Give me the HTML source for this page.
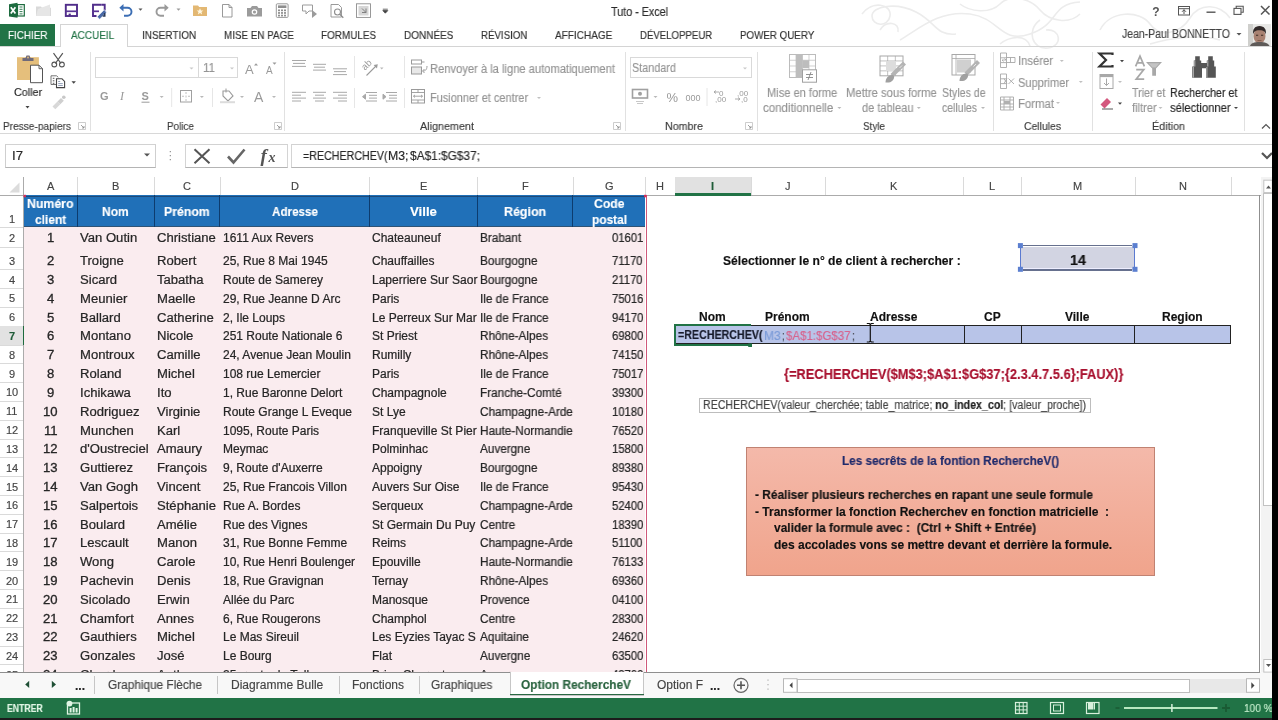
<!DOCTYPE html><html><head><meta charset='utf-8'><style>
html,body{margin:0;padding:0;width:1278px;height:720px;overflow:hidden;background:#fff;position:relative}
.a{position:absolute}
.t{position:absolute;white-space:pre;transform-origin:0 0;-webkit-text-stroke-width:0.15px;will-change:transform;}
svg.a{overflow:visible}
</style></head><body><div class="a" style="left:1272px;top:0px;width:6px;height:720px;background:#000;"></div>
<div class="a" style="left:0px;top:718px;width:1272px;height:2px;background:#1c1c1c;"></div>
<svg class="a" style="left:0;top:0" width="1278" height="60"><g fill="none" stroke="#ececec" stroke-width="1.6"><path d="M862 14c10-14 30-10 28 2s-18 10-18 0 24-14 44-4 20 24 40 22"/><path d="M900 40c20-12 40-30 70-26s30 30 60 20 20-30 50-32"/><path d="M960 4c10 8 30 10 40 0s30-6 40 6 30 14 40 4"/><path d="M1040 20c-14 10-8 30 8 28s12-20-2-18"/><path d="M1000 44c10-8 26-10 30 2"/><path d="M1100 30c10-20 40-20 50-6s30 10 40-6 30-14 40 0"/><path d="M1150 44c20-6 50-10 70-4"/><path d="M880 30c6-10 20-8 18 2"/></g></svg>
<div class="t" id="t0" style="left:610.50px;top:5.64px;font:400 12px/12px 'Liberation Sans',sans-serif;color:#2a2a2a;transform:scaleX(0.8965);">Tuto - Excel</div>
<div class="a" style="left:0px;top:24px;width:55px;height:22.5px;background:#217346;"></div>
<div class="t" id="t1" style="left:7.50px;top:30.49px;font:400 11px/11px 'Liberation Sans',sans-serif;color:#fff;transform:scaleX(0.8977);">FICHIER</div>
<div class="a" style="left:59.5px;top:24px;width:68.0px;height:23px;background:#fff;border:1px solid #d4d4d4;border-bottom:none;box-sizing:border-box;"></div>
<div class="a" style="left:0px;top:46px;width:59.5px;height:1px;background:#d4d4d4;"></div>
<div class="a" style="left:127.5px;top:46px;width:1144.5px;height:1px;background:#d4d4d4;"></div>
<div class="t" id="t2" style="left:71.40px;top:30.49px;font:400 11px/11px 'Liberation Sans',sans-serif;color:#217346;transform:scaleX(0.9059);">ACCUEIL</div>
<div class="t" id="t3" style="left:142.40px;top:30.49px;font:400 11px/11px 'Liberation Sans',sans-serif;color:#303030;transform:scaleX(0.9078);">INSERTION</div>
<div class="t" id="t4" style="left:224.40px;top:30.49px;font:400 11px/11px 'Liberation Sans',sans-serif;color:#303030;transform:scaleX(0.8943);">MISE EN PAGE</div>
<div class="t" id="t5" style="left:321.40px;top:30.49px;font:400 11px/11px 'Liberation Sans',sans-serif;color:#303030;transform:scaleX(0.9014);">FORMULES</div>
<div class="t" id="t6" style="left:404.00px;top:30.49px;font:400 11px/11px 'Liberation Sans',sans-serif;color:#303030;transform:scaleX(0.9080);">DONNÉES</div>
<div class="t" id="t7" style="left:481.00px;top:30.49px;font:400 11px/11px 'Liberation Sans',sans-serif;color:#303030;transform:scaleX(0.8825);">RÉVISION</div>
<div class="t" id="t8" style="left:555.00px;top:30.49px;font:400 11px/11px 'Liberation Sans',sans-serif;color:#303030;transform:scaleX(0.9118);">AFFICHAGE</div>
<div class="t" id="t9" style="left:640.00px;top:30.49px;font:400 11px/11px 'Liberation Sans',sans-serif;color:#303030;transform:scaleX(0.8748);">DÉVELOPPEUR</div>
<div class="t" id="t10" style="left:739.80px;top:30.49px;font:400 11px/11px 'Liberation Sans',sans-serif;color:#303030;transform:scaleX(0.8895);">POWER QUERY</div>
<div class="t" id="t11" style="left:1121.60px;top:28.34px;font:400 12px/12px 'Liberation Sans',sans-serif;color:#444;transform:scaleX(0.8722);">Jean-Paul BONNETTO</div>
<div class="a" style="left:0px;top:133px;width:1272px;height:1px;background:#d8d8d8;"></div>
<div class="t" id="t12" style="left:13.60px;top:87.42px;font:400 11.2px/11.2px 'Liberation Sans',sans-serif;color:#262626;transform:scaleX(0.9646);">Coller</div>
<div class="t" id="t13" style="left:3.00px;top:120.69px;font:400 11px/11px 'Liberation Sans',sans-serif;color:#3a3a3a;transform:scaleX(0.9191);">Presse-papiers</div>
<div class="t" id="t14" style="left:166.50px;top:120.69px;font:400 11px/11px 'Liberation Sans',sans-serif;color:#3a3a3a;transform:scaleX(0.9009);">Police</div>
<div class="t" id="t15" style="left:420.00px;top:120.69px;font:400 11px/11px 'Liberation Sans',sans-serif;color:#3a3a3a;transform:scaleX(0.9810);">Alignement</div>
<div class="t" id="t16" style="left:664.50px;top:120.69px;font:400 11px/11px 'Liberation Sans',sans-serif;color:#3a3a3a;transform:scaleX(0.9712);">Nombre</div>
<div class="t" id="t17" style="left:863.00px;top:120.69px;font:400 11px/11px 'Liberation Sans',sans-serif;color:#3a3a3a;transform:scaleX(0.8991);">Style</div>
<div class="t" id="t18" style="left:1023.50px;top:120.69px;font:400 11px/11px 'Liberation Sans',sans-serif;color:#3a3a3a;transform:scaleX(0.9453);">Cellules</div>
<div class="t" id="t19" style="left:1151.50px;top:120.69px;font:400 11px/11px 'Liberation Sans',sans-serif;color:#3a3a3a;transform:scaleX(0.9810);">Édition</div>
<div class="a" style="left:90px;top:52px;width:1px;height:79px;background:#e1e1e1;"></div>
<div class="a" style="left:284px;top:52px;width:1px;height:79px;background:#e1e1e1;"></div>
<div class="a" style="left:625.4px;top:52px;width:1.0px;height:79px;background:#e1e1e1;"></div>
<div class="a" style="left:757px;top:52px;width:1px;height:79px;background:#e1e1e1;"></div>
<div class="a" style="left:992.5px;top:52px;width:1.0px;height:79px;background:#e1e1e1;"></div>
<div class="a" style="left:1092px;top:52px;width:1px;height:79px;background:#e1e1e1;"></div>
<div class="a" style="left:1244px;top:52px;width:1px;height:79px;background:#e1e1e1;"></div>
<div class="a" style="left:95px;top:57.4px;width:143px;height:21.000000000000007px;background:#fff;box-shadow:inset 0 0 0 1px #d9d9d9;"></div>
<div class="a" style="left:198px;top:57.4px;width:1px;height:21.000000000000007px;background:#d9d9d9;"></div>
<div class="t" id="t20" style="left:203.00px;top:62.34px;font:400 12px/12px 'Liberation Sans',sans-serif;color:#949494;transform:scaleX(0.9624);">11</div>
<div class="a" style="left:629.5px;top:57.3px;width:122.5px;height:21.10000000000001px;background:#fff;box-shadow:inset 0 0 0 1px #d9d9d9;"></div>
<div class="t" id="t21" style="left:632.40px;top:62.34px;font:400 12px/12px 'Liberation Sans',sans-serif;color:#949494;transform:scaleX(0.9034);">Standard</div>
<div class="t" id="t22" style="left:429.50px;top:62.84px;font:400 12px/12px 'Liberation Sans',sans-serif;color:#949494;transform:scaleX(0.9306);">Renvoyer à la ligne automatiquement</div>
<div class="t" id="t23" style="left:429.50px;top:91.84px;font:400 12px/12px 'Liberation Sans',sans-serif;color:#949494;transform:scaleX(0.9126);">Fusionner et centrer</div>
<div class="t" id="t24" style="left:766.80px;top:86.84px;font:400 12px/12px 'Liberation Sans',sans-serif;color:#949494;transform:scaleX(0.9246);">Mise en forme</div>
<div class="t" id="t25" style="left:763.40px;top:101.84px;font:400 12px/12px 'Liberation Sans',sans-serif;color:#949494;transform:scaleX(0.9579);">conditionnelle</div>
<div class="t" id="t26" style="left:846.20px;top:86.84px;font:400 12px/12px 'Liberation Sans',sans-serif;color:#949494;transform:scaleX(0.9390);">Mettre sous forme</div>
<div class="t" id="t27" style="left:862.30px;top:101.84px;font:400 12px/12px 'Liberation Sans',sans-serif;color:#949494;transform:scaleX(0.9168);">de tableau</div>
<div class="t" id="t28" style="left:942.00px;top:86.84px;font:400 12px/12px 'Liberation Sans',sans-serif;color:#949494;transform:scaleX(0.8833);">Styles de</div>
<div class="t" id="t29" style="left:942.00px;top:101.84px;font:400 12px/12px 'Liberation Sans',sans-serif;color:#949494;transform:scaleX(0.8743);">cellules</div>
<div class="t" id="t30" style="left:1017.60px;top:55.34px;font:400 12px/12px 'Liberation Sans',sans-serif;color:#949494;transform:scaleX(0.9368);">Insérer</div>
<div class="t" id="t31" style="left:1017.60px;top:76.84px;font:400 12px/12px 'Liberation Sans',sans-serif;color:#949494;transform:scaleX(0.9213);">Supprimer</div>
<div class="t" id="t32" style="left:1017.60px;top:98.34px;font:400 12px/12px 'Liberation Sans',sans-serif;color:#949494;transform:scaleX(0.9470);">Format</div>
<div class="t" id="t33" style="left:1132.30px;top:86.84px;font:400 12px/12px 'Liberation Sans',sans-serif;color:#949494;transform:scaleX(0.8865);">Trier et</div>
<div class="t" id="t34" style="left:1132.30px;top:101.84px;font:400 12px/12px 'Liberation Sans',sans-serif;color:#949494;transform:scaleX(0.9261);">filtrer</div>
<div class="t" id="t35" style="left:1170.00px;top:86.84px;font:400 12px/12px 'Liberation Sans',sans-serif;color:#262626;transform:scaleX(0.8955);">Rechercher et</div>
<div class="t" id="t36" style="left:1170.00px;top:101.84px;font:400 12px/12px 'Liberation Sans',sans-serif;color:#262626;transform:scaleX(0.9379);">sélectionner</div>
<div class="a" style="left:5.25px;top:143.6px;width:150.75px;height:24.400000000000006px;background:#fff;border:1px solid #cfcfcf;border-top:1.5px solid #d2d2d2;border-bottom:1px solid #b4b4b4;box-sizing:border-box;"></div>
<div class="t" id="t37" style="left:11.50px;top:149.84px;font:400 12px/12px 'Liberation Sans',sans-serif;color:#262626;transform:scaleX(1.0983);">I7</div>
<div class="a" style="left:184.8px;top:143.6px;width:102.80000000000001px;height:24.400000000000006px;background:#fff;border:1px solid #d4d4d4;border-top:1.5px solid #d2d2d2;border-bottom:1px solid #b4b4b4;box-sizing:border-box;"></div>
<div class="a" style="left:290.6px;top:143.6px;width:981.4px;height:24.400000000000006px;background:#fff;border-top:1.5px solid #d2d2d2;border-bottom:1px solid #b4b4b4;border-left:1px solid #d4d4d4;box-sizing:border-box;"></div>
<div class="t" id="t38" style="left:302.50px;top:149.84px;font:400 12px/12px 'Liberation Sans',sans-serif;color:#262626;transform:scaleX(0.8893);">=RECHERCHEV(</div>
<div class="t" id="t39" style="left:388.20px;top:149.84px;font:400 12px/12px 'Liberation Sans',sans-serif;color:#262626;transform:scaleX(1.0242);">M3;</div>
<div class="t" id="t40" style="left:410.10px;top:149.84px;font:400 12px/12px 'Liberation Sans',sans-serif;color:#262626;transform:scaleX(0.9896);">$A$1:$G$37;</div>
<div class="a" style="left:0px;top:177px;width:1262px;height:18.30000000000001px;background:#fff;"></div>
<div class="a" style="left:0px;top:195px;width:1262px;height:1px;background:#ababab;"></div>
<div class="a" style="left:77.3px;top:177px;width:1.0px;height:18px;background:#dadada;"></div>
<div class="t" id="t41" style="left:46.98px;top:180.99px;font:400 11px/11px 'Liberation Sans',sans-serif;color:#444;">A</div>
<div class="a" style="left:154.3px;top:177px;width:1.0px;height:18px;background:#dadada;"></div>
<div class="t" id="t42" style="left:112.13px;top:180.99px;font:400 11px/11px 'Liberation Sans',sans-serif;color:#444;">B</div>
<div class="a" style="left:219.7px;top:177px;width:1.0px;height:18px;background:#dadada;"></div>
<div class="t" id="t43" style="left:183.02px;top:180.99px;font:400 11px/11px 'Liberation Sans',sans-serif;color:#444;">C</div>
<div class="a" style="left:369.3px;top:177px;width:1.0px;height:18px;background:#dadada;"></div>
<div class="t" id="t44" style="left:290.52px;top:180.99px;font:400 11px/11px 'Liberation Sans',sans-serif;color:#444;">D</div>
<div class="a" style="left:477.4px;top:177px;width:1.0px;height:18px;background:#dadada;"></div>
<div class="t" id="t45" style="left:419.68px;top:180.99px;font:400 11px/11px 'Liberation Sans',sans-serif;color:#444;">E</div>
<div class="a" style="left:572.8px;top:177px;width:1.0px;height:18px;background:#dadada;"></div>
<div class="t" id="t46" style="left:521.73px;top:180.99px;font:400 11px/11px 'Liberation Sans',sans-serif;color:#444;">F</div>
<div class="a" style="left:645.4px;top:177px;width:1.0px;height:18px;background:#dadada;"></div>
<div class="t" id="t47" style="left:604.82px;top:180.99px;font:400 11px/11px 'Liberation Sans',sans-serif;color:#444;">G</div>
<div class="a" style="left:674.5px;top:177px;width:1.0px;height:18px;background:#dadada;"></div>
<div class="t" id="t48" style="left:655.97px;top:180.99px;font:400 11px/11px 'Liberation Sans',sans-serif;color:#444;">H</div>
<div class="a" style="left:674.5px;top:177px;width:76.10000000000002px;height:18px;background:#e1e1e1;"></div>
<div class="a" style="left:674.5px;top:193px;width:76.10000000000002px;height:2.5px;background:#217346;"></div>
<div class="a" style="left:750.6px;top:177px;width:1.0px;height:18px;background:#dadada;"></div>
<div class="t" id="t49" style="left:711.02px;top:180.99px;font:700 11px/11px 'Liberation Sans',sans-serif;color:#1e5c38;">I</div>
<div class="a" style="left:825px;top:177px;width:1px;height:18px;background:#dadada;"></div>
<div class="t" id="t50" style="left:785.05px;top:180.99px;font:400 11px/11px 'Liberation Sans',sans-serif;color:#444;">J</div>
<div class="a" style="left:963px;top:177px;width:1px;height:18px;background:#dadada;"></div>
<div class="t" id="t51" style="left:890.33px;top:180.99px;font:400 11px/11px 'Liberation Sans',sans-serif;color:#444;">K</div>
<div class="a" style="left:1021px;top:177px;width:1px;height:18px;background:#dadada;"></div>
<div class="t" id="t52" style="left:988.94px;top:180.99px;font:400 11px/11px 'Liberation Sans',sans-serif;color:#444;">L</div>
<div class="a" style="left:1134.5px;top:177px;width:1.0px;height:18px;background:#dadada;"></div>
<div class="t" id="t53" style="left:1073.16px;top:180.99px;font:400 11px/11px 'Liberation Sans',sans-serif;color:#444;">M</div>
<div class="a" style="left:1230.5px;top:177px;width:1.0px;height:18px;background:#dadada;"></div>
<div class="t" id="t54" style="left:1178.52px;top:180.99px;font:400 11px/11px 'Liberation Sans',sans-serif;color:#444;">N</div>
<div class="a" style="left:23px;top:177px;width:1px;height:495px;background:#ababab;"></div>
<div class="a" style="left:0px;top:227.3px;width:23px;height:1.0px;background:#dadada;"></div>
<div class="t" id="t55" style="left:8.94px;top:213.79px;font:400 11px/11px 'Liberation Sans',sans-serif;color:#444;">1</div>
<div class="a" style="left:0px;top:246.7px;width:23px;height:1.0px;background:#dadada;"></div>
<div class="t" id="t56" style="left:8.94px;top:233.19px;font:400 11px/11px 'Liberation Sans',sans-serif;color:#444;">2</div>
<div class="a" style="left:0px;top:269.3px;width:23px;height:1.0px;background:#dadada;"></div>
<div class="t" id="t57" style="left:8.94px;top:255.79px;font:400 11px/11px 'Liberation Sans',sans-serif;color:#444;">3</div>
<div class="a" style="left:0px;top:288.11px;width:23px;height:1.0px;background:#dadada;"></div>
<div class="t" id="t58" style="left:8.94px;top:274.60px;font:400 11px/11px 'Liberation Sans',sans-serif;color:#444;">4</div>
<div class="a" style="left:0px;top:306.92px;width:23px;height:1.0px;background:#dadada;"></div>
<div class="t" id="t59" style="left:8.94px;top:293.41px;font:400 11px/11px 'Liberation Sans',sans-serif;color:#444;">5</div>
<div class="a" style="left:0px;top:325.73px;width:23px;height:1.0px;background:#dadada;"></div>
<div class="t" id="t60" style="left:8.94px;top:312.22px;font:400 11px/11px 'Liberation Sans',sans-serif;color:#444;">6</div>
<div class="a" style="left:0px;top:325.73px;width:23px;height:18.810000000000002px;background:#e2e2e2;"></div>
<div class="a" style="left:22.6px;top:325.73px;width:1.5999999999999979px;height:18.810000000000002px;background:#1e6b3e;"></div>
<div class="a" style="left:0px;top:344.54px;width:23px;height:1.0px;background:#dadada;"></div>
<div class="t" id="t61" style="left:8.94px;top:331.03px;font:700 11px/11px 'Liberation Sans',sans-serif;color:#1e5c38;">7</div>
<div class="a" style="left:0px;top:363.35px;width:23px;height:1.0px;background:#dadada;"></div>
<div class="t" id="t62" style="left:8.94px;top:349.84px;font:400 11px/11px 'Liberation Sans',sans-serif;color:#444;">8</div>
<div class="a" style="left:0px;top:382.15999999999997px;width:23px;height:1.0px;background:#dadada;"></div>
<div class="t" id="t63" style="left:8.94px;top:368.65px;font:400 11px/11px 'Liberation Sans',sans-serif;color:#444;">9</div>
<div class="a" style="left:0px;top:400.97px;width:23px;height:1.0px;background:#dadada;"></div>
<div class="t" id="t64" style="left:5.88px;top:387.46px;font:400 11px/11px 'Liberation Sans',sans-serif;color:#444;">10</div>
<div class="a" style="left:0px;top:419.78px;width:23px;height:1.0px;background:#dadada;"></div>
<div class="t" id="t65" style="left:6.29px;top:406.27px;font:400 11px/11px 'Liberation Sans',sans-serif;color:#444;">11</div>
<div class="a" style="left:0px;top:438.59000000000003px;width:23px;height:1.0px;background:#dadada;"></div>
<div class="t" id="t66" style="left:5.88px;top:425.08px;font:400 11px/11px 'Liberation Sans',sans-serif;color:#444;">12</div>
<div class="a" style="left:0px;top:457.4px;width:23px;height:1.0px;background:#dadada;"></div>
<div class="t" id="t67" style="left:5.88px;top:443.89px;font:400 11px/11px 'Liberation Sans',sans-serif;color:#444;">13</div>
<div class="a" style="left:0px;top:476.21000000000004px;width:23px;height:1.0px;background:#dadada;"></div>
<div class="t" id="t68" style="left:5.88px;top:462.70px;font:400 11px/11px 'Liberation Sans',sans-serif;color:#444;">14</div>
<div class="a" style="left:0px;top:495.02px;width:23px;height:1.0px;background:#dadada;"></div>
<div class="t" id="t69" style="left:5.88px;top:481.51px;font:400 11px/11px 'Liberation Sans',sans-serif;color:#444;">15</div>
<div class="a" style="left:0px;top:513.8299999999999px;width:23px;height:1.0px;background:#dadada;"></div>
<div class="t" id="t70" style="left:5.88px;top:500.32px;font:400 11px/11px 'Liberation Sans',sans-serif;color:#444;">16</div>
<div class="a" style="left:0px;top:532.64px;width:23px;height:1.0px;background:#dadada;"></div>
<div class="t" id="t71" style="left:5.88px;top:519.13px;font:400 11px/11px 'Liberation Sans',sans-serif;color:#444;">17</div>
<div class="a" style="left:0px;top:551.45px;width:23px;height:1.0px;background:#dadada;"></div>
<div class="t" id="t72" style="left:5.88px;top:537.94px;font:400 11px/11px 'Liberation Sans',sans-serif;color:#444;">18</div>
<div class="a" style="left:0px;top:570.26px;width:23px;height:1.0px;background:#dadada;"></div>
<div class="t" id="t73" style="left:5.88px;top:556.75px;font:400 11px/11px 'Liberation Sans',sans-serif;color:#444;">19</div>
<div class="a" style="left:0px;top:589.0699999999999px;width:23px;height:1.0px;background:#dadada;"></div>
<div class="t" id="t74" style="left:5.88px;top:575.56px;font:400 11px/11px 'Liberation Sans',sans-serif;color:#444;">20</div>
<div class="a" style="left:0px;top:607.88px;width:23px;height:1.0px;background:#dadada;"></div>
<div class="t" id="t75" style="left:5.88px;top:594.37px;font:400 11px/11px 'Liberation Sans',sans-serif;color:#444;">21</div>
<div class="a" style="left:0px;top:626.69px;width:23px;height:1.0px;background:#dadada;"></div>
<div class="t" id="t76" style="left:5.88px;top:613.18px;font:400 11px/11px 'Liberation Sans',sans-serif;color:#444;">22</div>
<div class="a" style="left:0px;top:645.5px;width:23px;height:1.0px;background:#dadada;"></div>
<div class="t" id="t77" style="left:5.88px;top:631.99px;font:400 11px/11px 'Liberation Sans',sans-serif;color:#444;">23</div>
<div class="a" style="left:0px;top:664.31px;width:23px;height:1.0px;background:#dadada;"></div>
<div class="t" id="t78" style="left:5.88px;top:650.80px;font:400 11px/11px 'Liberation Sans',sans-serif;color:#444;">24</div>
<div class="t" id="t79" style="left:5.88px;top:669.61px;font:400 11px/11px 'Liberation Sans',sans-serif;color:#444;">25</div>
<div class="a" style="left:24px;top:195.3px;width:621.4px;height:476.7px;background:#faecef;"></div>
<div class="a" style="left:24px;top:195.3px;width:621.4px;height:32.0px;background:#2070b8;"></div>
<div class="a" style="left:24px;top:195.6px;width:621.4px;height:1.1999999999999886px;background:#1e4a78;"></div>
<div class="a" style="left:24px;top:226.2px;width:621.4px;height:1.3000000000000114px;background:#2f5375;"></div>
<div class="a" style="left:76.8px;top:195.3px;width:1.0px;height:32.0px;background:#0d3c6e;"></div>
<div class="a" style="left:153.8px;top:195.3px;width:1.0px;height:32.0px;background:#0d3c6e;"></div>
<div class="a" style="left:219.2px;top:195.3px;width:1.0px;height:32.0px;background:#0d3c6e;"></div>
<div class="a" style="left:368.8px;top:195.3px;width:1.0px;height:32.0px;background:#0d3c6e;"></div>
<div class="a" style="left:476.9px;top:195.3px;width:1.0px;height:32.0px;background:#0d3c6e;"></div>
<div class="a" style="left:572.3px;top:195.3px;width:1.0px;height:32.0px;background:#0d3c6e;"></div>
<div class="a" style="left:645.9px;top:195.3px;width:1.1000000000000227px;height:476.7px;background:#d0587a;"></div>
<div class="t" id="t80" style="left:102.45px;top:205.00px;font:700 13px/13px 'Liberation Sans',sans-serif;color:#fff;transform:scaleX(0.9242);">Nom</div>
<div class="t" id="t81" style="left:164.15px;top:205.00px;font:700 13px/13px 'Liberation Sans',sans-serif;color:#fff;transform:scaleX(0.9441);">Prénom</div>
<div class="t" id="t82" style="left:271.50px;top:205.00px;font:700 13px/13px 'Liberation Sans',sans-serif;color:#fff;transform:scaleX(0.8965);">Adresse</div>
<div class="t" id="t83" style="left:409.85px;top:205.00px;font:700 13px/13px 'Liberation Sans',sans-serif;color:#fff;transform:scaleX(1.0183);">Ville</div>
<div class="t" id="t84" style="left:504.00px;top:205.00px;font:700 13px/13px 'Liberation Sans',sans-serif;color:#fff;transform:scaleX(0.9577);">Région</div>
<div class="t" id="t85" style="left:27.40px;top:197.20px;font:700 13px/13px 'Liberation Sans',sans-serif;color:#fff;transform:scaleX(0.9466);">Numéro</div>
<div class="t" id="t86" style="left:35.02px;top:212.80px;font:700 13px/13px 'Liberation Sans',sans-serif;color:#fff;transform:scaleX(0.9200);">client</div>
<div class="t" id="t87" style="left:593.85px;top:197.20px;font:700 13px/13px 'Liberation Sans',sans-serif;color:#fff;transform:scaleX(0.9385);">Code</div>
<div class="t" id="t88" style="left:591.60px;top:212.80px;font:700 13px/13px 'Liberation Sans',sans-serif;color:#fff;transform:scaleX(0.9139);">postal</div>
<div class="t" id="t89" style="left:47.01px;top:232.04px;font:400 12px/12px 'Liberation Sans',sans-serif;color:#262626;transform:scaleX(1.0900);-webkit-text-stroke:0.3px #262626;">1</div>
<div class="t" id="t90" style="left:79.90px;top:232.04px;font:400 12px/12px 'Liberation Sans',sans-serif;color:#262626;transform:scaleX(1.0900);-webkit-text-stroke:0.22px #262626;">Van Outin</div>
<div class="t" id="t91" style="left:156.90px;top:232.04px;font:400 12px/12px 'Liberation Sans',sans-serif;color:#262626;transform:scaleX(1.0900);-webkit-text-stroke:0.22px #262626;">Christiane</div>
<div class="t" id="t92" style="left:222.70px;top:232.04px;font:400 12px/12px 'Liberation Sans',sans-serif;color:#262626;-webkit-text-stroke:0.22px #262626;">1611 Aux Revers</div>
<div class="t" id="t93" style="left:372.30px;top:232.04px;font:400 12px/12px 'Liberation Sans',sans-serif;color:#262626;-webkit-text-stroke:0.22px #262626;">Chateauneuf</div>
<div class="t" id="t94" style="left:480.20px;top:232.04px;font:400 12px/12px 'Liberation Sans',sans-serif;color:#262626;transform:scaleX(0.9800);-webkit-text-stroke:0.22px #262626;">Brabant</div>
<div class="t" id="t95" style="left:611.63px;top:232.04px;font:400 12px/12px 'Liberation Sans',sans-serif;color:#262626;transform:scaleX(0.9400);-webkit-text-stroke:0.22px #262626;">01601</div>
<div class="t" id="t96" style="left:47.01px;top:254.84px;font:400 12px/12px 'Liberation Sans',sans-serif;color:#262626;transform:scaleX(1.0900);-webkit-text-stroke:0.3px #262626;">2</div>
<div class="t" id="t97" style="left:79.90px;top:254.84px;font:400 12px/12px 'Liberation Sans',sans-serif;color:#262626;transform:scaleX(1.0900);-webkit-text-stroke:0.22px #262626;">Troigne</div>
<div class="t" id="t98" style="left:156.90px;top:254.84px;font:400 12px/12px 'Liberation Sans',sans-serif;color:#262626;transform:scaleX(1.0900);-webkit-text-stroke:0.22px #262626;">Robert</div>
<div class="t" id="t99" style="left:222.70px;top:254.84px;font:400 12px/12px 'Liberation Sans',sans-serif;color:#262626;-webkit-text-stroke:0.22px #262626;">25, Rue 8 Mai 1945</div>
<div class="t" id="t100" style="left:372.30px;top:254.84px;font:400 12px/12px 'Liberation Sans',sans-serif;color:#262626;-webkit-text-stroke:0.22px #262626;">Chauffailles</div>
<div class="t" id="t101" style="left:480.20px;top:254.84px;font:400 12px/12px 'Liberation Sans',sans-serif;color:#262626;transform:scaleX(0.9800);-webkit-text-stroke:0.22px #262626;">Bourgogne</div>
<div class="t" id="t102" style="left:612.46px;top:254.84px;font:400 12px/12px 'Liberation Sans',sans-serif;color:#262626;transform:scaleX(0.9400);-webkit-text-stroke:0.22px #262626;">71170</div>
<div class="t" id="t103" style="left:47.01px;top:274.05px;font:400 12px/12px 'Liberation Sans',sans-serif;color:#262626;transform:scaleX(1.0900);-webkit-text-stroke:0.3px #262626;">3</div>
<div class="t" id="t104" style="left:79.90px;top:274.05px;font:400 12px/12px 'Liberation Sans',sans-serif;color:#262626;transform:scaleX(1.0900);-webkit-text-stroke:0.22px #262626;">Sicard</div>
<div class="t" id="t105" style="left:156.90px;top:274.05px;font:400 12px/12px 'Liberation Sans',sans-serif;color:#262626;transform:scaleX(1.0900);-webkit-text-stroke:0.22px #262626;">Tabatha</div>
<div class="t" id="t106" style="left:222.70px;top:274.05px;font:400 12px/12px 'Liberation Sans',sans-serif;color:#262626;-webkit-text-stroke:0.22px #262626;">Route de Samerey</div>
<div class="t" id="t107" style="left:372.30px;top:274.05px;font:400 12px/12px 'Liberation Sans',sans-serif;color:#262626;-webkit-text-stroke:0.22px #262626;">Laperriere Sur Saor</div>
<div class="t" id="t108" style="left:480.20px;top:274.05px;font:400 12px/12px 'Liberation Sans',sans-serif;color:#262626;transform:scaleX(0.9800);-webkit-text-stroke:0.22px #262626;">Bourgogne</div>
<div class="t" id="t109" style="left:612.46px;top:274.05px;font:400 12px/12px 'Liberation Sans',sans-serif;color:#262626;transform:scaleX(0.9400);-webkit-text-stroke:0.22px #262626;">21170</div>
<div class="t" id="t110" style="left:47.01px;top:292.86px;font:400 12px/12px 'Liberation Sans',sans-serif;color:#262626;transform:scaleX(1.0900);-webkit-text-stroke:0.3px #262626;">4</div>
<div class="t" id="t111" style="left:79.90px;top:292.86px;font:400 12px/12px 'Liberation Sans',sans-serif;color:#262626;transform:scaleX(1.0900);-webkit-text-stroke:0.22px #262626;">Meunier</div>
<div class="t" id="t112" style="left:156.90px;top:292.86px;font:400 12px/12px 'Liberation Sans',sans-serif;color:#262626;transform:scaleX(1.0900);-webkit-text-stroke:0.22px #262626;">Maelle</div>
<div class="t" id="t113" style="left:222.70px;top:292.86px;font:400 12px/12px 'Liberation Sans',sans-serif;color:#262626;-webkit-text-stroke:0.22px #262626;">29, Rue Jeanne D Arc</div>
<div class="t" id="t114" style="left:372.30px;top:292.86px;font:400 12px/12px 'Liberation Sans',sans-serif;color:#262626;-webkit-text-stroke:0.22px #262626;">Paris</div>
<div class="t" id="t115" style="left:480.20px;top:292.86px;font:400 12px/12px 'Liberation Sans',sans-serif;color:#262626;transform:scaleX(0.9800);-webkit-text-stroke:0.22px #262626;">Ile de France</div>
<div class="t" id="t116" style="left:611.63px;top:292.86px;font:400 12px/12px 'Liberation Sans',sans-serif;color:#262626;transform:scaleX(0.9400);-webkit-text-stroke:0.22px #262626;">75016</div>
<div class="t" id="t117" style="left:47.01px;top:311.67px;font:400 12px/12px 'Liberation Sans',sans-serif;color:#262626;transform:scaleX(1.0900);-webkit-text-stroke:0.3px #262626;">5</div>
<div class="t" id="t118" style="left:79.90px;top:311.67px;font:400 12px/12px 'Liberation Sans',sans-serif;color:#262626;transform:scaleX(1.0900);-webkit-text-stroke:0.22px #262626;">Ballard</div>
<div class="t" id="t119" style="left:156.90px;top:311.67px;font:400 12px/12px 'Liberation Sans',sans-serif;color:#262626;transform:scaleX(1.0900);-webkit-text-stroke:0.22px #262626;">Catherine</div>
<div class="t" id="t120" style="left:222.70px;top:311.67px;font:400 12px/12px 'Liberation Sans',sans-serif;color:#262626;-webkit-text-stroke:0.22px #262626;">2, Ile Loups</div>
<div class="t" id="t121" style="left:372.30px;top:311.67px;font:400 12px/12px 'Liberation Sans',sans-serif;color:#262626;-webkit-text-stroke:0.22px #262626;">Le Perreux Sur Mar</div>
<div class="t" id="t122" style="left:480.20px;top:311.67px;font:400 12px/12px 'Liberation Sans',sans-serif;color:#262626;transform:scaleX(0.9800);-webkit-text-stroke:0.22px #262626;">Ile de France</div>
<div class="t" id="t123" style="left:611.63px;top:311.67px;font:400 12px/12px 'Liberation Sans',sans-serif;color:#262626;transform:scaleX(0.9400);-webkit-text-stroke:0.22px #262626;">94170</div>
<div class="t" id="t124" style="left:47.01px;top:330.48px;font:400 12px/12px 'Liberation Sans',sans-serif;color:#262626;transform:scaleX(1.0900);-webkit-text-stroke:0.3px #262626;">6</div>
<div class="t" id="t125" style="left:79.90px;top:330.48px;font:400 12px/12px 'Liberation Sans',sans-serif;color:#262626;transform:scaleX(1.0900);-webkit-text-stroke:0.22px #262626;">Montano</div>
<div class="t" id="t126" style="left:156.90px;top:330.48px;font:400 12px/12px 'Liberation Sans',sans-serif;color:#262626;transform:scaleX(1.0900);-webkit-text-stroke:0.22px #262626;">Nicole</div>
<div class="t" id="t127" style="left:222.70px;top:330.48px;font:400 12px/12px 'Liberation Sans',sans-serif;color:#262626;-webkit-text-stroke:0.22px #262626;">251 Route Nationale 6</div>
<div class="t" id="t128" style="left:372.30px;top:330.48px;font:400 12px/12px 'Liberation Sans',sans-serif;color:#262626;-webkit-text-stroke:0.22px #262626;">St Priest</div>
<div class="t" id="t129" style="left:480.20px;top:330.48px;font:400 12px/12px 'Liberation Sans',sans-serif;color:#262626;transform:scaleX(0.9800);-webkit-text-stroke:0.22px #262626;">Rhône-Alpes</div>
<div class="t" id="t130" style="left:611.63px;top:330.48px;font:400 12px/12px 'Liberation Sans',sans-serif;color:#262626;transform:scaleX(0.9400);-webkit-text-stroke:0.22px #262626;">69800</div>
<div class="t" id="t131" style="left:47.01px;top:349.29px;font:400 12px/12px 'Liberation Sans',sans-serif;color:#262626;transform:scaleX(1.0900);-webkit-text-stroke:0.3px #262626;">7</div>
<div class="t" id="t132" style="left:79.90px;top:349.29px;font:400 12px/12px 'Liberation Sans',sans-serif;color:#262626;transform:scaleX(1.0900);-webkit-text-stroke:0.22px #262626;">Montroux</div>
<div class="t" id="t133" style="left:156.90px;top:349.29px;font:400 12px/12px 'Liberation Sans',sans-serif;color:#262626;transform:scaleX(1.0900);-webkit-text-stroke:0.22px #262626;">Camille</div>
<div class="t" id="t134" style="left:222.70px;top:349.29px;font:400 12px/12px 'Liberation Sans',sans-serif;color:#262626;-webkit-text-stroke:0.22px #262626;">24, Avenue Jean Moulin</div>
<div class="t" id="t135" style="left:372.30px;top:349.29px;font:400 12px/12px 'Liberation Sans',sans-serif;color:#262626;-webkit-text-stroke:0.22px #262626;">Rumilly</div>
<div class="t" id="t136" style="left:480.20px;top:349.29px;font:400 12px/12px 'Liberation Sans',sans-serif;color:#262626;transform:scaleX(0.9800);-webkit-text-stroke:0.22px #262626;">Rhône-Alpes</div>
<div class="t" id="t137" style="left:611.63px;top:349.29px;font:400 12px/12px 'Liberation Sans',sans-serif;color:#262626;transform:scaleX(0.9400);-webkit-text-stroke:0.22px #262626;">74150</div>
<div class="t" id="t138" style="left:47.01px;top:368.10px;font:400 12px/12px 'Liberation Sans',sans-serif;color:#262626;transform:scaleX(1.0900);-webkit-text-stroke:0.3px #262626;">8</div>
<div class="t" id="t139" style="left:79.90px;top:368.10px;font:400 12px/12px 'Liberation Sans',sans-serif;color:#262626;transform:scaleX(1.0900);-webkit-text-stroke:0.22px #262626;">Roland</div>
<div class="t" id="t140" style="left:156.90px;top:368.10px;font:400 12px/12px 'Liberation Sans',sans-serif;color:#262626;transform:scaleX(1.0900);-webkit-text-stroke:0.22px #262626;">Michel</div>
<div class="t" id="t141" style="left:222.70px;top:368.10px;font:400 12px/12px 'Liberation Sans',sans-serif;color:#262626;-webkit-text-stroke:0.22px #262626;">108 rue Lemercier</div>
<div class="t" id="t142" style="left:372.30px;top:368.10px;font:400 12px/12px 'Liberation Sans',sans-serif;color:#262626;-webkit-text-stroke:0.22px #262626;">Paris</div>
<div class="t" id="t143" style="left:480.20px;top:368.10px;font:400 12px/12px 'Liberation Sans',sans-serif;color:#262626;transform:scaleX(0.9800);-webkit-text-stroke:0.22px #262626;">Ile de France</div>
<div class="t" id="t144" style="left:611.63px;top:368.10px;font:400 12px/12px 'Liberation Sans',sans-serif;color:#262626;transform:scaleX(0.9400);-webkit-text-stroke:0.22px #262626;">75017</div>
<div class="t" id="t145" style="left:47.01px;top:386.91px;font:400 12px/12px 'Liberation Sans',sans-serif;color:#262626;transform:scaleX(1.0900);-webkit-text-stroke:0.3px #262626;">9</div>
<div class="t" id="t146" style="left:79.90px;top:386.91px;font:400 12px/12px 'Liberation Sans',sans-serif;color:#262626;transform:scaleX(1.0900);-webkit-text-stroke:0.22px #262626;">Ichikawa</div>
<div class="t" id="t147" style="left:156.90px;top:386.91px;font:400 12px/12px 'Liberation Sans',sans-serif;color:#262626;transform:scaleX(1.0900);-webkit-text-stroke:0.22px #262626;">Ito</div>
<div class="t" id="t148" style="left:222.70px;top:386.91px;font:400 12px/12px 'Liberation Sans',sans-serif;color:#262626;-webkit-text-stroke:0.22px #262626;">1, Rue Baronne Delort</div>
<div class="t" id="t149" style="left:372.30px;top:386.91px;font:400 12px/12px 'Liberation Sans',sans-serif;color:#262626;-webkit-text-stroke:0.22px #262626;">Champagnole</div>
<div class="t" id="t150" style="left:480.20px;top:386.91px;font:400 12px/12px 'Liberation Sans',sans-serif;color:#262626;transform:scaleX(0.9800);-webkit-text-stroke:0.22px #262626;">Franche-Comté</div>
<div class="t" id="t151" style="left:611.63px;top:386.91px;font:400 12px/12px 'Liberation Sans',sans-serif;color:#262626;transform:scaleX(0.9400);-webkit-text-stroke:0.22px #262626;">39300</div>
<div class="t" id="t152" style="left:43.37px;top:405.72px;font:400 12px/12px 'Liberation Sans',sans-serif;color:#262626;transform:scaleX(1.0900);-webkit-text-stroke:0.3px #262626;">10</div>
<div class="t" id="t153" style="left:79.90px;top:405.72px;font:400 12px/12px 'Liberation Sans',sans-serif;color:#262626;transform:scaleX(1.0900);-webkit-text-stroke:0.22px #262626;">Rodriguez</div>
<div class="t" id="t154" style="left:156.90px;top:405.72px;font:400 12px/12px 'Liberation Sans',sans-serif;color:#262626;transform:scaleX(1.0900);-webkit-text-stroke:0.22px #262626;">Virginie</div>
<div class="t" id="t155" style="left:222.70px;top:405.72px;font:400 12px/12px 'Liberation Sans',sans-serif;color:#262626;-webkit-text-stroke:0.22px #262626;">Route Grange L Eveque</div>
<div class="t" id="t156" style="left:372.30px;top:405.72px;font:400 12px/12px 'Liberation Sans',sans-serif;color:#262626;-webkit-text-stroke:0.22px #262626;">St Lye</div>
<div class="t" id="t157" style="left:480.20px;top:405.72px;font:400 12px/12px 'Liberation Sans',sans-serif;color:#262626;transform:scaleX(0.9800);-webkit-text-stroke:0.22px #262626;">Champagne-Arde</div>
<div class="t" id="t158" style="left:611.63px;top:405.72px;font:400 12px/12px 'Liberation Sans',sans-serif;color:#262626;transform:scaleX(0.9400);-webkit-text-stroke:0.22px #262626;">10180</div>
<div class="t" id="t159" style="left:43.85px;top:424.53px;font:400 12px/12px 'Liberation Sans',sans-serif;color:#262626;transform:scaleX(1.0900);-webkit-text-stroke:0.3px #262626;">11</div>
<div class="t" id="t160" style="left:79.90px;top:424.53px;font:400 12px/12px 'Liberation Sans',sans-serif;color:#262626;transform:scaleX(1.0900);-webkit-text-stroke:0.22px #262626;">Munchen</div>
<div class="t" id="t161" style="left:156.90px;top:424.53px;font:400 12px/12px 'Liberation Sans',sans-serif;color:#262626;transform:scaleX(1.0900);-webkit-text-stroke:0.22px #262626;">Karl</div>
<div class="t" id="t162" style="left:222.70px;top:424.53px;font:400 12px/12px 'Liberation Sans',sans-serif;color:#262626;-webkit-text-stroke:0.22px #262626;">1095, Route Paris</div>
<div class="t" id="t163" style="left:372.30px;top:424.53px;font:400 12px/12px 'Liberation Sans',sans-serif;color:#262626;-webkit-text-stroke:0.22px #262626;">Franqueville St Pier</div>
<div class="t" id="t164" style="left:480.20px;top:424.53px;font:400 12px/12px 'Liberation Sans',sans-serif;color:#262626;transform:scaleX(0.9800);-webkit-text-stroke:0.22px #262626;">Haute-Normandie</div>
<div class="t" id="t165" style="left:611.63px;top:424.53px;font:400 12px/12px 'Liberation Sans',sans-serif;color:#262626;transform:scaleX(0.9400);-webkit-text-stroke:0.22px #262626;">76520</div>
<div class="t" id="t166" style="left:43.37px;top:443.34px;font:400 12px/12px 'Liberation Sans',sans-serif;color:#262626;transform:scaleX(1.0900);-webkit-text-stroke:0.3px #262626;">12</div>
<div class="t" id="t167" style="left:79.90px;top:443.34px;font:400 12px/12px 'Liberation Sans',sans-serif;color:#262626;transform:scaleX(1.0900);-webkit-text-stroke:0.22px #262626;">d&#x27;Oustreciel</div>
<div class="t" id="t168" style="left:156.90px;top:443.34px;font:400 12px/12px 'Liberation Sans',sans-serif;color:#262626;transform:scaleX(1.0900);-webkit-text-stroke:0.22px #262626;">Amaury</div>
<div class="t" id="t169" style="left:222.70px;top:443.34px;font:400 12px/12px 'Liberation Sans',sans-serif;color:#262626;-webkit-text-stroke:0.22px #262626;">Meymac</div>
<div class="t" id="t170" style="left:372.30px;top:443.34px;font:400 12px/12px 'Liberation Sans',sans-serif;color:#262626;-webkit-text-stroke:0.22px #262626;">Polminhac</div>
<div class="t" id="t171" style="left:480.20px;top:443.34px;font:400 12px/12px 'Liberation Sans',sans-serif;color:#262626;transform:scaleX(0.9800);-webkit-text-stroke:0.22px #262626;">Auvergne</div>
<div class="t" id="t172" style="left:611.63px;top:443.34px;font:400 12px/12px 'Liberation Sans',sans-serif;color:#262626;transform:scaleX(0.9400);-webkit-text-stroke:0.22px #262626;">15800</div>
<div class="t" id="t173" style="left:43.37px;top:462.15px;font:400 12px/12px 'Liberation Sans',sans-serif;color:#262626;transform:scaleX(1.0900);-webkit-text-stroke:0.3px #262626;">13</div>
<div class="t" id="t174" style="left:79.90px;top:462.15px;font:400 12px/12px 'Liberation Sans',sans-serif;color:#262626;transform:scaleX(1.0900);-webkit-text-stroke:0.22px #262626;">Guttierez</div>
<div class="t" id="t175" style="left:156.90px;top:462.15px;font:400 12px/12px 'Liberation Sans',sans-serif;color:#262626;transform:scaleX(1.0900);-webkit-text-stroke:0.22px #262626;">François</div>
<div class="t" id="t176" style="left:222.70px;top:462.15px;font:400 12px/12px 'Liberation Sans',sans-serif;color:#262626;-webkit-text-stroke:0.22px #262626;">9, Route d&#x27;Auxerre</div>
<div class="t" id="t177" style="left:372.30px;top:462.15px;font:400 12px/12px 'Liberation Sans',sans-serif;color:#262626;-webkit-text-stroke:0.22px #262626;">Appoigny</div>
<div class="t" id="t178" style="left:480.20px;top:462.15px;font:400 12px/12px 'Liberation Sans',sans-serif;color:#262626;transform:scaleX(0.9800);-webkit-text-stroke:0.22px #262626;">Bourgogne</div>
<div class="t" id="t179" style="left:611.63px;top:462.15px;font:400 12px/12px 'Liberation Sans',sans-serif;color:#262626;transform:scaleX(0.9400);-webkit-text-stroke:0.22px #262626;">89380</div>
<div class="t" id="t180" style="left:43.37px;top:480.96px;font:400 12px/12px 'Liberation Sans',sans-serif;color:#262626;transform:scaleX(1.0900);-webkit-text-stroke:0.3px #262626;">14</div>
<div class="t" id="t181" style="left:79.90px;top:480.96px;font:400 12px/12px 'Liberation Sans',sans-serif;color:#262626;transform:scaleX(1.0900);-webkit-text-stroke:0.22px #262626;">Van Gogh</div>
<div class="t" id="t182" style="left:156.90px;top:480.96px;font:400 12px/12px 'Liberation Sans',sans-serif;color:#262626;transform:scaleX(1.0900);-webkit-text-stroke:0.22px #262626;">Vincent</div>
<div class="t" id="t183" style="left:222.70px;top:480.96px;font:400 12px/12px 'Liberation Sans',sans-serif;color:#262626;-webkit-text-stroke:0.22px #262626;">25, Rue Francois Villon</div>
<div class="t" id="t184" style="left:372.30px;top:480.96px;font:400 12px/12px 'Liberation Sans',sans-serif;color:#262626;-webkit-text-stroke:0.22px #262626;">Auvers Sur Oise</div>
<div class="t" id="t185" style="left:480.20px;top:480.96px;font:400 12px/12px 'Liberation Sans',sans-serif;color:#262626;transform:scaleX(0.9800);-webkit-text-stroke:0.22px #262626;">Ile de France</div>
<div class="t" id="t186" style="left:611.63px;top:480.96px;font:400 12px/12px 'Liberation Sans',sans-serif;color:#262626;transform:scaleX(0.9400);-webkit-text-stroke:0.22px #262626;">95430</div>
<div class="t" id="t187" style="left:43.37px;top:499.77px;font:400 12px/12px 'Liberation Sans',sans-serif;color:#262626;transform:scaleX(1.0900);-webkit-text-stroke:0.3px #262626;">15</div>
<div class="t" id="t188" style="left:79.90px;top:499.77px;font:400 12px/12px 'Liberation Sans',sans-serif;color:#262626;transform:scaleX(1.0900);-webkit-text-stroke:0.22px #262626;">Salpertois</div>
<div class="t" id="t189" style="left:156.90px;top:499.77px;font:400 12px/12px 'Liberation Sans',sans-serif;color:#262626;transform:scaleX(1.0900);-webkit-text-stroke:0.22px #262626;">Stéphanie</div>
<div class="t" id="t190" style="left:222.70px;top:499.77px;font:400 12px/12px 'Liberation Sans',sans-serif;color:#262626;-webkit-text-stroke:0.22px #262626;">Rue A. Bordes</div>
<div class="t" id="t191" style="left:372.30px;top:499.77px;font:400 12px/12px 'Liberation Sans',sans-serif;color:#262626;-webkit-text-stroke:0.22px #262626;">Serqueux</div>
<div class="t" id="t192" style="left:480.20px;top:499.77px;font:400 12px/12px 'Liberation Sans',sans-serif;color:#262626;transform:scaleX(0.9800);-webkit-text-stroke:0.22px #262626;">Champagne-Arde</div>
<div class="t" id="t193" style="left:611.63px;top:499.77px;font:400 12px/12px 'Liberation Sans',sans-serif;color:#262626;transform:scaleX(0.9400);-webkit-text-stroke:0.22px #262626;">52400</div>
<div class="t" id="t194" style="left:43.37px;top:518.58px;font:400 12px/12px 'Liberation Sans',sans-serif;color:#262626;transform:scaleX(1.0900);-webkit-text-stroke:0.3px #262626;">16</div>
<div class="t" id="t195" style="left:79.90px;top:518.58px;font:400 12px/12px 'Liberation Sans',sans-serif;color:#262626;transform:scaleX(1.0900);-webkit-text-stroke:0.22px #262626;">Boulard</div>
<div class="t" id="t196" style="left:156.90px;top:518.58px;font:400 12px/12px 'Liberation Sans',sans-serif;color:#262626;transform:scaleX(1.0900);-webkit-text-stroke:0.22px #262626;">Amélie</div>
<div class="t" id="t197" style="left:222.70px;top:518.58px;font:400 12px/12px 'Liberation Sans',sans-serif;color:#262626;-webkit-text-stroke:0.22px #262626;">Rue des Vignes</div>
<div class="t" id="t198" style="left:372.30px;top:518.58px;font:400 12px/12px 'Liberation Sans',sans-serif;color:#262626;-webkit-text-stroke:0.22px #262626;">St Germain Du Puy</div>
<div class="t" id="t199" style="left:480.20px;top:518.58px;font:400 12px/12px 'Liberation Sans',sans-serif;color:#262626;transform:scaleX(0.9800);-webkit-text-stroke:0.22px #262626;">Centre</div>
<div class="t" id="t200" style="left:611.63px;top:518.58px;font:400 12px/12px 'Liberation Sans',sans-serif;color:#262626;transform:scaleX(0.9400);-webkit-text-stroke:0.22px #262626;">18390</div>
<div class="t" id="t201" style="left:43.37px;top:537.39px;font:400 12px/12px 'Liberation Sans',sans-serif;color:#262626;transform:scaleX(1.0900);-webkit-text-stroke:0.3px #262626;">17</div>
<div class="t" id="t202" style="left:79.90px;top:537.39px;font:400 12px/12px 'Liberation Sans',sans-serif;color:#262626;transform:scaleX(1.0900);-webkit-text-stroke:0.22px #262626;">Lescault</div>
<div class="t" id="t203" style="left:156.90px;top:537.39px;font:400 12px/12px 'Liberation Sans',sans-serif;color:#262626;transform:scaleX(1.0900);-webkit-text-stroke:0.22px #262626;">Manon</div>
<div class="t" id="t204" style="left:222.70px;top:537.39px;font:400 12px/12px 'Liberation Sans',sans-serif;color:#262626;-webkit-text-stroke:0.22px #262626;">31, Rue Bonne Femme</div>
<div class="t" id="t205" style="left:372.30px;top:537.39px;font:400 12px/12px 'Liberation Sans',sans-serif;color:#262626;-webkit-text-stroke:0.22px #262626;">Reims</div>
<div class="t" id="t206" style="left:480.20px;top:537.39px;font:400 12px/12px 'Liberation Sans',sans-serif;color:#262626;transform:scaleX(0.9800);-webkit-text-stroke:0.22px #262626;">Champagne-Arde</div>
<div class="t" id="t207" style="left:612.46px;top:537.39px;font:400 12px/12px 'Liberation Sans',sans-serif;color:#262626;transform:scaleX(0.9400);-webkit-text-stroke:0.22px #262626;">51100</div>
<div class="t" id="t208" style="left:43.37px;top:556.20px;font:400 12px/12px 'Liberation Sans',sans-serif;color:#262626;transform:scaleX(1.0900);-webkit-text-stroke:0.3px #262626;">18</div>
<div class="t" id="t209" style="left:79.90px;top:556.20px;font:400 12px/12px 'Liberation Sans',sans-serif;color:#262626;transform:scaleX(1.0900);-webkit-text-stroke:0.22px #262626;">Wong</div>
<div class="t" id="t210" style="left:156.90px;top:556.20px;font:400 12px/12px 'Liberation Sans',sans-serif;color:#262626;transform:scaleX(1.0900);-webkit-text-stroke:0.22px #262626;">Carole</div>
<div class="t" id="t211" style="left:222.70px;top:556.20px;font:400 12px/12px 'Liberation Sans',sans-serif;color:#262626;-webkit-text-stroke:0.22px #262626;">10, Rue Henri Boulenger</div>
<div class="t" id="t212" style="left:372.30px;top:556.20px;font:400 12px/12px 'Liberation Sans',sans-serif;color:#262626;-webkit-text-stroke:0.22px #262626;">Epouville</div>
<div class="t" id="t213" style="left:480.20px;top:556.20px;font:400 12px/12px 'Liberation Sans',sans-serif;color:#262626;transform:scaleX(0.9800);-webkit-text-stroke:0.22px #262626;">Haute-Normandie</div>
<div class="t" id="t214" style="left:611.63px;top:556.20px;font:400 12px/12px 'Liberation Sans',sans-serif;color:#262626;transform:scaleX(0.9400);-webkit-text-stroke:0.22px #262626;">76133</div>
<div class="t" id="t215" style="left:43.37px;top:575.01px;font:400 12px/12px 'Liberation Sans',sans-serif;color:#262626;transform:scaleX(1.0900);-webkit-text-stroke:0.3px #262626;">19</div>
<div class="t" id="t216" style="left:79.90px;top:575.01px;font:400 12px/12px 'Liberation Sans',sans-serif;color:#262626;transform:scaleX(1.0900);-webkit-text-stroke:0.22px #262626;">Pachevin</div>
<div class="t" id="t217" style="left:156.90px;top:575.01px;font:400 12px/12px 'Liberation Sans',sans-serif;color:#262626;transform:scaleX(1.0900);-webkit-text-stroke:0.22px #262626;">Denis</div>
<div class="t" id="t218" style="left:222.70px;top:575.01px;font:400 12px/12px 'Liberation Sans',sans-serif;color:#262626;-webkit-text-stroke:0.22px #262626;">18, Rue Gravignan</div>
<div class="t" id="t219" style="left:372.30px;top:575.01px;font:400 12px/12px 'Liberation Sans',sans-serif;color:#262626;-webkit-text-stroke:0.22px #262626;">Ternay</div>
<div class="t" id="t220" style="left:480.20px;top:575.01px;font:400 12px/12px 'Liberation Sans',sans-serif;color:#262626;transform:scaleX(0.9800);-webkit-text-stroke:0.22px #262626;">Rhône-Alpes</div>
<div class="t" id="t221" style="left:611.63px;top:575.01px;font:400 12px/12px 'Liberation Sans',sans-serif;color:#262626;transform:scaleX(0.9400);-webkit-text-stroke:0.22px #262626;">69360</div>
<div class="t" id="t222" style="left:43.37px;top:593.82px;font:400 12px/12px 'Liberation Sans',sans-serif;color:#262626;transform:scaleX(1.0900);-webkit-text-stroke:0.3px #262626;">20</div>
<div class="t" id="t223" style="left:79.90px;top:593.82px;font:400 12px/12px 'Liberation Sans',sans-serif;color:#262626;transform:scaleX(1.0900);-webkit-text-stroke:0.22px #262626;">Sicolado</div>
<div class="t" id="t224" style="left:156.90px;top:593.82px;font:400 12px/12px 'Liberation Sans',sans-serif;color:#262626;transform:scaleX(1.0900);-webkit-text-stroke:0.22px #262626;">Erwin</div>
<div class="t" id="t225" style="left:222.70px;top:593.82px;font:400 12px/12px 'Liberation Sans',sans-serif;color:#262626;-webkit-text-stroke:0.22px #262626;">Allée du Parc</div>
<div class="t" id="t226" style="left:372.30px;top:593.82px;font:400 12px/12px 'Liberation Sans',sans-serif;color:#262626;-webkit-text-stroke:0.22px #262626;">Manosque</div>
<div class="t" id="t227" style="left:480.20px;top:593.82px;font:400 12px/12px 'Liberation Sans',sans-serif;color:#262626;transform:scaleX(0.9800);-webkit-text-stroke:0.22px #262626;">Provence</div>
<div class="t" id="t228" style="left:611.63px;top:593.82px;font:400 12px/12px 'Liberation Sans',sans-serif;color:#262626;transform:scaleX(0.9400);-webkit-text-stroke:0.22px #262626;">04100</div>
<div class="t" id="t229" style="left:43.37px;top:612.63px;font:400 12px/12px 'Liberation Sans',sans-serif;color:#262626;transform:scaleX(1.0900);-webkit-text-stroke:0.3px #262626;">21</div>
<div class="t" id="t230" style="left:79.90px;top:612.63px;font:400 12px/12px 'Liberation Sans',sans-serif;color:#262626;transform:scaleX(1.0900);-webkit-text-stroke:0.22px #262626;">Chamfort</div>
<div class="t" id="t231" style="left:156.90px;top:612.63px;font:400 12px/12px 'Liberation Sans',sans-serif;color:#262626;transform:scaleX(1.0900);-webkit-text-stroke:0.22px #262626;">Annes</div>
<div class="t" id="t232" style="left:222.70px;top:612.63px;font:400 12px/12px 'Liberation Sans',sans-serif;color:#262626;-webkit-text-stroke:0.22px #262626;">6, Rue Rougerons</div>
<div class="t" id="t233" style="left:372.30px;top:612.63px;font:400 12px/12px 'Liberation Sans',sans-serif;color:#262626;-webkit-text-stroke:0.22px #262626;">Champhol</div>
<div class="t" id="t234" style="left:480.20px;top:612.63px;font:400 12px/12px 'Liberation Sans',sans-serif;color:#262626;transform:scaleX(0.9800);-webkit-text-stroke:0.22px #262626;">Centre</div>
<div class="t" id="t235" style="left:611.63px;top:612.63px;font:400 12px/12px 'Liberation Sans',sans-serif;color:#262626;transform:scaleX(0.9400);-webkit-text-stroke:0.22px #262626;">28300</div>
<div class="t" id="t236" style="left:43.37px;top:631.44px;font:400 12px/12px 'Liberation Sans',sans-serif;color:#262626;transform:scaleX(1.0900);-webkit-text-stroke:0.3px #262626;">22</div>
<div class="t" id="t237" style="left:79.90px;top:631.44px;font:400 12px/12px 'Liberation Sans',sans-serif;color:#262626;transform:scaleX(1.0900);-webkit-text-stroke:0.22px #262626;">Gauthiers</div>
<div class="t" id="t238" style="left:156.90px;top:631.44px;font:400 12px/12px 'Liberation Sans',sans-serif;color:#262626;transform:scaleX(1.0900);-webkit-text-stroke:0.22px #262626;">Michel</div>
<div class="t" id="t239" style="left:222.70px;top:631.44px;font:400 12px/12px 'Liberation Sans',sans-serif;color:#262626;-webkit-text-stroke:0.22px #262626;">Le Mas Sireuil</div>
<div class="t" id="t240" style="left:372.30px;top:631.44px;font:400 12px/12px 'Liberation Sans',sans-serif;color:#262626;-webkit-text-stroke:0.22px #262626;">Les Eyzies Tayac S</div>
<div class="t" id="t241" style="left:480.20px;top:631.44px;font:400 12px/12px 'Liberation Sans',sans-serif;color:#262626;transform:scaleX(0.9800);-webkit-text-stroke:0.22px #262626;">Aquitaine</div>
<div class="t" id="t242" style="left:611.63px;top:631.44px;font:400 12px/12px 'Liberation Sans',sans-serif;color:#262626;transform:scaleX(0.9400);-webkit-text-stroke:0.22px #262626;">24620</div>
<div class="t" id="t243" style="left:43.37px;top:650.25px;font:400 12px/12px 'Liberation Sans',sans-serif;color:#262626;transform:scaleX(1.0900);-webkit-text-stroke:0.3px #262626;">23</div>
<div class="t" id="t244" style="left:79.90px;top:650.25px;font:400 12px/12px 'Liberation Sans',sans-serif;color:#262626;transform:scaleX(1.0900);-webkit-text-stroke:0.22px #262626;">Gonzales</div>
<div class="t" id="t245" style="left:156.90px;top:650.25px;font:400 12px/12px 'Liberation Sans',sans-serif;color:#262626;transform:scaleX(1.0900);-webkit-text-stroke:0.22px #262626;">José</div>
<div class="t" id="t246" style="left:222.70px;top:650.25px;font:400 12px/12px 'Liberation Sans',sans-serif;color:#262626;-webkit-text-stroke:0.22px #262626;">Le Bourg</div>
<div class="t" id="t247" style="left:372.30px;top:650.25px;font:400 12px/12px 'Liberation Sans',sans-serif;color:#262626;-webkit-text-stroke:0.22px #262626;">Flat</div>
<div class="t" id="t248" style="left:480.20px;top:650.25px;font:400 12px/12px 'Liberation Sans',sans-serif;color:#262626;transform:scaleX(0.9800);-webkit-text-stroke:0.22px #262626;">Auvergne</div>
<div class="t" id="t249" style="left:611.63px;top:650.25px;font:400 12px/12px 'Liberation Sans',sans-serif;color:#262626;transform:scaleX(0.9400);-webkit-text-stroke:0.22px #262626;">63500</div>
<div class="t" id="t250" style="left:43.37px;top:669.06px;font:400 12px/12px 'Liberation Sans',sans-serif;color:#262626;transform:scaleX(1.0900);-webkit-text-stroke:0.3px #262626;">24</div>
<div class="t" id="t251" style="left:79.90px;top:669.06px;font:400 12px/12px 'Liberation Sans',sans-serif;color:#262626;transform:scaleX(1.0900);-webkit-text-stroke:0.22px #262626;">Chardon</div>
<div class="t" id="t252" style="left:156.90px;top:669.06px;font:400 12px/12px 'Liberation Sans',sans-serif;color:#262626;transform:scaleX(1.0900);-webkit-text-stroke:0.22px #262626;">Anthony</div>
<div class="t" id="t253" style="left:222.70px;top:669.06px;font:400 12px/12px 'Liberation Sans',sans-serif;color:#262626;-webkit-text-stroke:0.22px #262626;">25, route de Tulle</div>
<div class="t" id="t254" style="left:372.30px;top:669.06px;font:400 12px/12px 'Liberation Sans',sans-serif;color:#262626;-webkit-text-stroke:0.22px #262626;">Brive Charente</div>
<div class="t" id="t255" style="left:480.20px;top:669.06px;font:400 12px/12px 'Liberation Sans',sans-serif;color:#262626;transform:scaleX(0.9800);-webkit-text-stroke:0.22px #262626;">Auvergne</div>
<div class="t" id="t256" style="left:611.63px;top:669.06px;font:400 12px/12px 'Liberation Sans',sans-serif;color:#262626;transform:scaleX(0.9400);-webkit-text-stroke:0.22px #262626;">43700</div>
<div class="t" id="t257" style="left:723.30px;top:254.84px;font:700 12px/12px 'Liberation Sans',sans-serif;color:#111;transform:scaleX(1.0091);">Sélectionner le n° de client à rechercher :</div>
<div class="a" style="left:1021px;top:246px;width:113.5px;height:24px;background:#d2d4e2;"></div>
<div class="a" style="left:1023px;top:245.2px;width:109px;height:1.1999999999999886px;background:#66708e;"></div>
<div class="a" style="left:1023px;top:246.4px;width:109px;height:1.0px;background:#fff;"></div>
<div class="a" style="left:1023px;top:269.3px;width:109px;height:1.3000000000000114px;background:#66708e;"></div>
<div class="a" style="left:1023px;top:268.3px;width:109px;height:1.0px;background:#eef;"></div>
<div class="a" style="left:1019.6px;top:246px;width:1.2000000000000455px;height:24px;background:#5b7ad0;"></div>
<div class="a" style="left:1134.2px;top:246px;width:1.2000000000000455px;height:24px;background:#5b7ad0;"></div>
<div class="t" id="t258" style="left:1069.70px;top:251.50px;font:700 15px/15px 'Liberation Sans',sans-serif;color:#111;transform:scaleX(0.9588);">14</div>
<div class="t" id="t259" style="left:699.16px;top:311.04px;font:700 12px/12px 'Liberation Sans',sans-serif;color:#111;">Nom</div>
<div class="t" id="t260" style="left:765.46px;top:311.04px;font:700 12px/12px 'Liberation Sans',sans-serif;color:#111;">Prénom</div>
<div class="t" id="t261" style="left:870.31px;top:311.04px;font:700 12px/12px 'Liberation Sans',sans-serif;color:#111;">Adresse</div>
<div class="t" id="t262" style="left:983.66px;top:311.04px;font:700 12px/12px 'Liberation Sans',sans-serif;color:#111;">CP</div>
<div class="t" id="t263" style="left:1065.47px;top:311.04px;font:700 12px/12px 'Liberation Sans',sans-serif;color:#111;">Ville</div>
<div class="t" id="t264" style="left:1162.16px;top:311.04px;font:700 12px/12px 'Liberation Sans',sans-serif;color:#111;">Region</div>
<div class="a" style="left:674.5px;top:325.3px;width:556.2px;height:18.69999999999999px;background:#b8c4e8;border:1px solid #222;box-sizing:border-box;"></div>
<div class="a" style="left:963.7px;top:325.3px;width:1.0px;height:18.69999999999999px;background:#222;"></div>
<div class="a" style="left:1020.8px;top:325.3px;width:1.0px;height:18.69999999999999px;background:#222;"></div>
<div class="a" style="left:1134.4px;top:325.3px;width:1.0px;height:18.69999999999999px;background:#222;"></div>
<div class="a" style="left:674px;top:324.3px;width:77.39999999999998px;height:1.6999999999999886px;background:#217346;"></div>
<div class="a" style="left:674px;top:344.2px;width:77.39999999999998px;height:1.8000000000000114px;background:#217346;"></div>
<div class="a" style="left:673.9px;top:324.3px;width:2.0px;height:21.69999999999999px;background:#217346;"></div>
<div class="t" id="t265" style="left:677.80px;top:329.02px;font:700 12.5px/12.5px 'Liberation Sans',sans-serif;color:#161a2a;transform:scaleX(0.8537);">=RECHERCHEV(</div>
<div class="t" id="t266" style="left:764.30px;top:329.30px;font:400 13px/13px 'Liberation Sans',sans-serif;color:#7b9bd8;transform:scaleX(0.9246);">M3</div>
<div class="t" id="t267" style="left:782.20px;top:329.30px;font:400 13px/13px 'Liberation Sans',sans-serif;color:#222;transform:scaleX(0.6897);">;</div>
<div class="t" id="t268" style="left:786.00px;top:329.30px;font:400 13px/13px 'Liberation Sans',sans-serif;color:#d6648e;transform:scaleX(0.8847);">$A$1:$G$37</div>
<div class="t" id="t269" style="left:852.30px;top:329.30px;font:400 13px/13px 'Liberation Sans',sans-serif;color:#222;transform:scaleX(0.7448);">;</div>
<div class="t" id="t270" style="left:783.60px;top:366.75px;font:700 14px/14px 'Liberation Sans',sans-serif;color:#a8102e;transform:scaleX(0.9173);">{=RECHERCHEV($M$3;$A$1:$G$37;{2.3.4.7.5.6};FAUX)}</div>
<div class="a" style="left:698.6px;top:397.9px;width:392.4px;height:15.5px;background:#fff;box-shadow:inset 0 0 0 1px #bdbdbd;"></div>
<div class="t" id="t271" style="left:703.00px;top:399.34px;font:400 12px/12px 'Liberation Sans',sans-serif;color:#444;transform:scaleX(0.8862);">RECHERCHEV(valeur_cherchée; table_matrice; <b style="color:#222">no_index_col</b>; [valeur_proche])</div>
<div class="a" style="left:746px;top:447.2px;width:409px;height:128.40000000000003px;background:linear-gradient(#f4b9aa,#f0a48c);border:1px solid #c08272;box-sizing:border-box;"></div>
<div class="t" id="t272" style="left:841.50px;top:454.84px;font:700 12px/12px 'Liberation Sans',sans-serif;color:#1f2a6b;transform:scaleX(0.9801);">Les secrêts de la fontion RechercheV()</div>
<div class="t" id="t273" style="left:755.00px;top:489.04px;font:700 12px/12px 'Liberation Sans',sans-serif;color:#111;transform:scaleX(0.9898);">- Réaliser plusieurs recherches en rapant une seule formule</div>
<div class="t" id="t274" style="left:755.00px;top:506.04px;font:700 12px/12px 'Liberation Sans',sans-serif;color:#111;">- Transformer la fonction Recherchev en fonction matricielle  :</div>
<div class="t" id="t275" style="left:773.70px;top:522.04px;font:700 12px/12px 'Liberation Sans',sans-serif;color:#111;transform:scaleX(0.9946);">valider la formule avec :  (Ctrl + Shift + Entrée)</div>
<div class="t" id="t276" style="left:773.70px;top:539.04px;font:700 12px/12px 'Liberation Sans',sans-serif;color:#111;">des accolades vons se mettre devant et derrière la formule.</div>
<div class="a" style="left:1259.2px;top:195.3px;width:1.0px;height:477.2px;background:#8f8f8f;"></div>
<div class="a" style="left:1260.5px;top:177px;width:11.5px;height:495.5px;background:#f3f3f3;"></div>
<div class="a" style="left:1263.3px;top:193px;width:8.700000000000045px;height:313px;background:#fff;border:1px solid #c2c2c2;border-right:none;box-sizing:border-box;"></div>
<div class="a" style="left:0px;top:672px;width:1272px;height:26px;background:#f8f8f8;"></div>
<div class="a" style="left:0px;top:672px;width:1260px;height:1px;background:#8f8f8f;"></div>
<div class="a" style="left:509.8px;top:671.5px;width:134.09999999999997px;height:24.0px;background:#fff;border:1px solid #c6c6c6;border-top:none;box-sizing:border-box;"></div>
<div class="a" style="left:510px;top:693.7px;width:133.89999999999998px;height:1.7000000000000455px;background:#2a6a44;"></div>
<div class="t" id="t277" style="left:74.99px;top:679.84px;font:700 12px/12px 'Liberation Sans',sans-serif;color:#222;">...</div>
<div class="a" style="left:94px;top:676px;width:1px;height:18px;background:#c6c6c6;"></div>
<div class="a" style="left:216.5px;top:676px;width:1.0px;height:18px;background:#c6c6c6;"></div>
<div class="a" style="left:339px;top:676px;width:1px;height:18px;background:#c6c6c6;"></div>
<div class="a" style="left:418.8px;top:676px;width:1.0px;height:18px;background:#c6c6c6;"></div>
<div class="t" id="t278" style="left:108.00px;top:678.84px;font:400 12px/12px 'Liberation Sans',sans-serif;color:#444;transform:scaleX(0.9854);">Graphique Flèche</div>
<div class="t" id="t279" style="left:231.30px;top:678.84px;font:400 12px/12px 'Liberation Sans',sans-serif;color:#444;transform:scaleX(1.0027);">Diagramme Bulle</div>
<div class="t" id="t280" style="left:352.00px;top:678.84px;font:400 12px/12px 'Liberation Sans',sans-serif;color:#444;">Fonctions</div>
<div class="t" id="t281" style="left:431.00px;top:678.84px;font:400 12px/12px 'Liberation Sans',sans-serif;color:#444;transform:scaleX(0.9896);">Graphiques</div>
<div class="t" id="t282" style="left:657.00px;top:678.84px;font:400 12px/12px 'Liberation Sans',sans-serif;color:#444;">Option F</div>
<div class="t" id="t283" style="left:521.30px;top:679.14px;font:700 12px/12px 'Liberation Sans',sans-serif;color:#2b6440;transform:scaleX(0.9878);">Option RechercheV</div>
<div class="t" id="t284" style="left:709.99px;top:679.84px;font:700 12px/12px 'Liberation Sans',sans-serif;color:#222;">...</div>
<div class="a" style="left:797px;top:678.5px;width:450px;height:14.0px;background:#e8e8e8;"></div>
<div class="a" style="left:797px;top:678.5px;width:393px;height:14.0px;background:#fff;border:1px solid #bdbdbd;box-sizing:border-box;"></div>
<div class="a" style="left:0px;top:698px;width:1272px;height:20px;background:#217346;"></div>
<div class="t" id="t285" style="left:6.90px;top:702.69px;font:700 11px/11px 'Liberation Sans',sans-serif;color:#e0f5e4;transform:scaleX(0.7892);">ENTRER</div>
<div class="t" id="t286" style="left:1243.60px;top:702.99px;font:400 11px/11px 'Liberation Sans',sans-serif;color:#c6efce;transform:scaleX(0.9200);">100 %</div>
<svg class="a" style="left:0;top:0" width="1278" height="720"><path d="M9 4.2 L17.5 2.8 L17.5 17.8 L9 16.4 Z" fill="#1d6b3f"/><rect x="17.5" y="4.6" width="6.8" height="11.4" fill="#fff" stroke="#1d6b3f" stroke-width="1.2"/><path d="M19.5 7h3M19.5 9.3h3M19.5 11.6h3M19.5 13.9h3" stroke="#1d6b3f" stroke-width="0.9"/><path d="M10.8 7.2 L15.4 13.6 M15.4 7.2 L10.8 13.6" stroke="#fff" stroke-width="1.7"/><path d="M36 6.5h5l1 1.2h9v8.3H36z" fill="#d9d9d9"/><path d="M38 9l12 -4.5v11.5H36z" fill="#e6e6e6"/><rect x="65.8" y="4.8" width="11.2" height="11.2" fill="#fff" stroke="#502d8a" stroke-width="1.9"/><path d="M65.8 11.3h11.2" stroke="#5a3596" stroke-width="1.7"/><rect x="68.6" y="13.6" width="2.2" height="2.6" fill="#502d8a"/><path d="M101.5 4.8H93v11.2h3.5M104.7 10.5V4.8h-3" fill="none" stroke="#502d8a" stroke-width="1.9"/><path d="M93 11.3h6" stroke="#5a3596" stroke-width="1.7"/><path d="M97.2 16.8 L104.2 9.8 L106.6 12.2 L99.6 19.2 Z" fill="#4a6aa8" stroke="#fff" stroke-width="0.6"/><path d="M104.7 13v3h-2" fill="none" stroke="#2a3a58" stroke-width="1.6"/><path d="M121 7.8 H127.5 A4 4 0 0 1 127.5 15.8 H124" fill="none" stroke="#3c6eb4" stroke-width="1.9"/><path d="M119.3 7.8 L123.5 4 L123.5 11.6 Z" fill="#3c6eb4"/><path d="M138.5 8.6h4l-2 2.2z" fill="#555"/><path d="M167 7.8 H160.5 A4 4 0 0 0 160.5 15.8 H164" fill="none" stroke="#9a9a9a" stroke-width="1.9"/><path d="M168.7 7.8 L164.5 4 L164.5 11.6 Z" fill="#9a9a9a"/><path d="M176.5 8.6h4l-2 2.2z" fill="#9a9a9a"/><path d="M193 5.5h5l1.2 1.5h7.8v9H193z" fill="#e3b873"/><path d="M200 8.2l1 2.2 2.3.2-1.8 1.5.6 2.3-2.1-1.3-2.1 1.3.6-2.3-1.8-1.5 2.3-.2z" fill="#fff7e0"/><path d="M222.5 4.5h6.5l3 3v9.5h-9.5z" fill="#fff" stroke="#8e8e8e" stroke-width="0.9"/><path d="M229 4.5v3h3" fill="none" stroke="#8e8e8e" stroke-width="0.9"/><path d="M247 8h3.5l1.5-2h5l1.5 2h3.5v8.5h-15z" fill="#9b9b9b"/><circle cx="254.5" cy="12" r="2.8" fill="#fff"/><circle cx="254.5" cy="12" r="1.6" fill="#9b9b9b"/><rect x="276.3" y="3.8" width="11.8" height="13.6" rx="1" fill="#fff" stroke="#8e8e8e" stroke-width="0.9"/><rect x="278" y="5.4" width="8.4" height="2.6" fill="#8e8e8e"/><rect x="278" y="9.5" width="2" height="1.7" fill="#8e8e8e"/><rect x="281" y="9.5" width="2" height="1.7" fill="#8e8e8e"/><rect x="284" y="9.5" width="2" height="1.7" fill="#8e8e8e"/><rect x="278" y="12.1" width="2" height="1.7" fill="#8e8e8e"/><rect x="281" y="12.1" width="2" height="1.7" fill="#8e8e8e"/><rect x="284" y="12.1" width="2" height="1.7" fill="#8e8e8e"/><rect x="278" y="14.7" width="2" height="1.7" fill="#8e8e8e"/><rect x="281" y="14.7" width="2" height="1.7" fill="#8e8e8e"/><rect x="284" y="14.7" width="2" height="1.7" fill="#8e8e8e"/><path d="M302.5 5h10v6h-3.5l-3 3v-3h-3.5z" fill="none" stroke="#9b9b9b" stroke-width="1"/><path d="M312 10l5 4-5 4z" fill="#9b9b9b"/><path d="M331 4.5h7.5l3 3v9.5h-10.5z" fill="#fff" stroke="#8e8e8e" stroke-width="0.9"/><circle cx="337.5" cy="12" r="3" fill="none" stroke="#8e8e8e" stroke-width="1.1"/><path d="M339.8 14.3l3.5 3.5" stroke="#8e8e8e" stroke-width="1.3"/><rect x="356.5" y="3.8" width="14" height="13.6" fill="#fff" stroke="#8e8e8e" stroke-width="0.9"/><rect x="358.5" y="6" width="10" height="9.5" fill="#d6d6d6"/><path d="M362 8.5l4 4M366 8.5v4h-4" stroke="#777" stroke-width="0.9" fill="none"/><path d="M382.8 9.2h5M382.8 10.6h5l-2.5 2.6z" stroke="#444" stroke-width="0.8" fill="#444"/><text x="1156" y="16" font-family="Liberation Sans" font-weight="700" font-size="12" fill="#555" text-anchor="middle">?</text><rect x="1178.5" y="6.5" width="11" height="8.5" fill="none" stroke="#555" stroke-width="1"/><path d="M1178.5 8.7h11M1184 14v-4.5M1182 11.8l2-2 2 2" stroke="#555" stroke-width="1" fill="none"/><path d="M1206.5 12.2h9" stroke="#555" stroke-width="1.4"/><rect x="1234" y="8.4" width="7" height="6" fill="none" stroke="#555" stroke-width="1.1"/><path d="M1236.2 8.2V6.2h7v6h-2" fill="none" stroke="#555" stroke-width="1.1"/><path d="M1261 6l8.5 8.5M1269.5 6L1261 14.5" stroke="#555" stroke-width="1.5"/><path d="M1236.5 33h5l-2.5 2.6z" fill="#555"/><rect x="1248" y="24" width="23" height="22" fill="#e8e8e6"/><rect x="1248" y="24" width="5" height="22" fill="#cfcfcc"/><ellipse cx="1259.5" cy="36" rx="6" ry="7.6" fill="#a98272"/><path d="M1253.2 34.5c-0.8-5 1.5-8.5 6.3-8.5s7.2 3.5 6.3 8.5c-0.6-2.5-1.8-4.2-6.3-4.2s-5.7 1.7-6.3 4.2z" fill="#322a2a"/><path d="M1250 46c0.8-2.8 4-4 9.5-4s8.8 1.2 10 4z" fill="#5e5a58"/><path d="M1256 35.2h2.2M1261 35.2h2.2" stroke="#3a2a22" stroke-width="1.1"/><path d="M1257.5 40.5h4" stroke="#7a5545" stroke-width="0.8"/><rect x="17" y="57.2" width="21.9" height="22.8" fill="#e5bf7c"/><path d="M22.5 61v-3h3l1-2.5h3l1 2.5h3v3z" fill="#6f6a7a"/><circle cx="28" cy="57.5" r="0.9" fill="#e5bf7c"/><path d="M30.5 65.2h8.5l3.5 3.5v14h-12z" fill="#fff" stroke="#555" stroke-width="1"/><path d="M39 65.2v3.5h3.5" fill="none" stroke="#555" stroke-width="0.9"/><path d="M25.5 106h4l-2 2.4z" fill="#444"/><path d="M53.5 53.2L61 63.5M62.8 53.2L55.3 63.5" stroke="#555" stroke-width="1.2"/><circle cx="54.3" cy="64.5" r="2.4" fill="none" stroke="#555" stroke-width="1.1"/><circle cx="61.9" cy="64.5" r="2.4" fill="none" stroke="#555" stroke-width="1.1"/><path d="M56 84.5h-5V75.8h5.5l1.8 1.5" fill="none" stroke="#666" stroke-width="0.9"/><path d="M52.8 78.3h1.6M52.8 80.8h1.6M52.8 83.3h1.6" stroke="#555" stroke-width="1"/><path d="M56.5 78.8h5.5l2.6 2.6v6.2h-8.1z" fill="#fff" stroke="#444" stroke-width="1.1"/><path d="M58.2 81.5h2M58.2 83.6h4.6M58.2 85.5h4.6" stroke="#8795b0" stroke-width="0.9"/><path d="M71.5 81.3h4.4l-2.2 2.4z" fill="#444"/><path d="M52.5 106.5l5-5 2.8 2.8-5 5z" fill="#d8d8d8"/><path d="M57.5 101.5l3.5-3.5 2.8 2.8-3.5 3.5z" fill="#cfcfcf"/><circle cx="63.8" cy="97.3" r="1.8" fill="#c8c8c8"/><path d="M189.5 67.5h4l-2 2z" fill="#c8c8c8"/><path d="M230 67.5h4l-2 2z" fill="#c8c8c8"/><text x="245" y="73.5" font-family="Liberation Sans" font-size="13" fill="#9a9a9a">A</text><path d="M254 65.5h4l-2-2.2z" fill="#9a9a9a"/><text x="266" y="73.5" font-family="Liberation Sans" font-size="10" fill="#9a9a9a">A</text><path d="M272.5 62.5h4l-2 2.2z" fill="#9a9a9a"/><text x="100" y="100.3" font-family="Liberation Sans" font-weight="700" font-size="11" fill="#9a9a9a">G</text><text x="120" y="100.3" font-family="Liberation Serif" font-style="italic" font-size="12" fill="#9a9a9a">I</text><text x="141.6" y="100.3" font-family="Liberation Sans" font-weight="700" font-size="11" fill="#9a9a9a">S</text><path d="M141.5 102.2h8" stroke="#9a9a9a"/><path d="M159.7 96h4l-2 2z" fill="#b8b8b8"/><path d="M199.9 96h4l-2 2z" fill="#b8b8b8"/><path d="M240 96h4l-2 2z" fill="#b8b8b8"/><path d="M272 96h4l-2 2z" fill="#b8b8b8"/><path d="M171.7 88v19M212.5 88v19" stroke="#e6e6e6"/><rect x="180.5" y="90.5" width="11" height="11.5" fill="none" stroke="#a0a0a0" stroke-width="1"/><path d="M186 92v2M186 95.5v2M186 99v2M182 96.25h2M188 96.25h2" stroke="#b0b0b0" stroke-width="0.8"/><path d="M223 91l6 0 4 5-5 5-5-5z" fill="none" stroke="#9a9a9a" stroke-width="1.1"/><path d="M226 88.5v4" stroke="#9a9a9a"/><path d="M220 102.2h15" stroke="#dcdcdc" stroke-width="2"/><text x="254" y="101.6" font-family="Liberation Sans" font-size="14" fill="#9a9a9a">A</text><path d="M292.0 60.5h14" stroke="#a8a8a8" stroke-width="1"/><path d="M293.0 63.4h12" stroke="#a8a8a8" stroke-width="1"/><path d="M292.0 66.4h14" stroke="#a8a8a8" stroke-width="1"/><path d="M313.0 64.3h13" stroke="#a8a8a8" stroke-width="1"/><path d="M314.0 67.2h11" stroke="#a8a8a8" stroke-width="1"/><path d="M313.0 70.1h13" stroke="#a8a8a8" stroke-width="1"/><path d="M333.0 68.8h14" stroke="#a8a8a8" stroke-width="1"/><path d="M334.0 71.6h12" stroke="#a8a8a8" stroke-width="1"/><path d="M333.0 74.6h14" stroke="#a8a8a8" stroke-width="1"/><path d="M292 92.3h14" stroke="#a8a8a8" stroke-width="1"/><path d="M292 95.2h9" stroke="#a8a8a8" stroke-width="1"/><path d="M292 98.1h14" stroke="#a8a8a8" stroke-width="1"/><path d="M292 101h9" stroke="#a8a8a8" stroke-width="1"/><path d="M313.0 92.3h13" stroke="#a8a8a8" stroke-width="1"/><path d="M315.0 95.2h9" stroke="#a8a8a8" stroke-width="1"/><path d="M313.0 98.1h13" stroke="#a8a8a8" stroke-width="1"/><path d="M315.0 101h9" stroke="#a8a8a8" stroke-width="1"/><path d="M333 92.3h14" stroke="#a8a8a8" stroke-width="1"/><path d="M338 95.2h9" stroke="#a8a8a8" stroke-width="1"/><path d="M333 98.1h14" stroke="#a8a8a8" stroke-width="1"/><path d="M338 101h9" stroke="#a8a8a8" stroke-width="1"/><path d="M354.5 56v22M354.5 88v20M404.5 56v22M404.5 88v20" stroke="#e6e6e6"/><text x="360.5" y="68" font-family="Liberation Sans" font-size="9.5" fill="#9a9a9a" transform="rotate(-45 366 64)">ab</text><path d="M366.5 75.5l10-10" stroke="#9a9a9a" stroke-width="1.1"/><path d="M377.8 64.2l-4.2 0.8 3.4 3.4z" fill="#9a9a9a"/><path d="M380 67.5h3.5l-1.75 2z" fill="#b8b8b8"/><path d="M366 92.5h11M369 95.3h8M369 98.1h8M366 101h11M362.5 96.7l3-2.5v5z" stroke="#a8a8a8" fill="#a8a8a8" stroke-width="1"/><path d="M386 92.5h11M389 95.3h8M389 98.1h8M386 101h11M386 96.7l-3-2.5v5z" stroke="#a8a8a8" fill="#a8a8a8" stroke-width="1"/><rect x="411.5" y="60" width="10" height="4" fill="none" stroke="#9a9a9a"/><path d="M421.5 62h3" stroke="#9a9a9a"/><rect x="411.5" y="67" width="10" height="7" fill="#e8e8e8" stroke="#9a9a9a"/><path d="M427 66c0 4-2 5-4 5m1.5-2l-2 2 2 2" fill="none" stroke="#9a9a9a"/><rect x="411.5" y="89.5" width="13" height="13.5" fill="none" stroke="#9a9a9a"/><path d="M411.5 92.5h13M411.5 100h13M418 89.5v3M418 100v3M413.5 96.2h9M413.5 96.2l1.5-1.3M413.5 96.2l1.5 1.3M422.5 96.2l-1.5-1.3M422.5 96.2l-1.5 1.3" stroke="#9a9a9a" fill="none" stroke-width="0.9"/><path d="M537 97h4l-2 2z" fill="#c0c0c0"/><path d="M743 67.5h4l-2 2z" fill="#c8c8c8"/><rect x="632.5" y="89.5" width="15" height="8.5" fill="none" stroke="#a0a0a0" stroke-width="1.6"/><circle cx="640" cy="93.8" r="2" fill="#a0a0a0"/><path d="M636 101.5h8M637 103.5h6" stroke="#c8c8c8"/><path d="M653.5 96h4l-2 2z" fill="#b8b8b8"/><text x="666.5" y="102" font-family="Liberation Sans" font-size="13" fill="#9a9a9a">%</text><text x="685.5" y="100.5" font-family="Liberation Sans" font-size="9" fill="#9a9a9a">000</text><path d="M707 88v18" stroke="#e6e6e6"/><text x="719" y="95.5" font-family="Liberation Sans" font-size="8" fill="#9a9a9a">0</text><text x="715" y="102" font-family="Liberation Sans" font-size="8" fill="#9a9a9a">,00</text><path d="M714 92h5M714 92l2-1.5M714 92l2 1.5" stroke="#9a9a9a" stroke-width="0.8"/><text x="737" y="95.5" font-family="Liberation Sans" font-size="8" fill="#9a9a9a">,00</text><text x="741" y="102" font-family="Liberation Sans" font-size="8" fill="#9a9a9a">,0</text><path d="M735 99h5M740 99l-2-1.5M740 99l-2 1.5" stroke="#9a9a9a" stroke-width="0.8"/><path d="M78.5 122.5h7v7h-7z" fill="none" stroke="#c0c0c0" stroke-width="0.8"/><path d="M81 125l3 3M84 126v2h-2" stroke="#888" stroke-width="0.8" fill="none"/><path d="M613.5 122.5h7v7h-7z" fill="none" stroke="#c0c0c0" stroke-width="0.8"/><path d="M616 125l3 3M619 126v2h-2" stroke="#888" stroke-width="0.8" fill="none"/><path d="M745.5 122.5h7v7h-7z" fill="none" stroke="#c0c0c0" stroke-width="0.8"/><path d="M748 125l3 3M751 126v2h-2" stroke="#888" stroke-width="0.8" fill="none"/><path d="M94 122.5h7v7h-7z M276 122.5h7v7h-7z" fill="none" stroke="none"/><path d="M274.5 122.5h7v7h-7z" fill="none" stroke="#c0c0c0" stroke-width="0.8"/><path d="M277 125l3 3M280 126v2h-2" stroke="#888" stroke-width="0.8" fill="none"/><rect x="789.5" y="54.5" width="26" height="23" fill="#fff" stroke="#bcbcbc" stroke-width="1"/><path d="M796.0 54.5v23" stroke="#bcbcbc" stroke-width="0.7"/><path d="M802.5 54.5v23" stroke="#bcbcbc" stroke-width="0.7"/><path d="M809.0 54.5v23" stroke="#bcbcbc" stroke-width="0.7"/><path d="M789.5 60.25h26" stroke="#bcbcbc" stroke-width="0.7"/><path d="M789.5 66.0h26" stroke="#bcbcbc" stroke-width="0.7"/><path d="M789.5 71.75h26" stroke="#bcbcbc" stroke-width="0.7"/><rect x="796" y="54.5" width="6.5" height="23" fill="#bdbdbd"/><rect x="802.5" y="60.2" width="6.5" height="8" fill="#bdbdbd"/><rect x="802.5" y="69.8" width="14" height="12.4" fill="#fff" stroke="#a0a0a0"/><path d="M806 74.5h7M806 77.5h7M811 72l-3 8" stroke="#888" stroke-width="0.9"/><path d="M837.4 107h4l-2 2z" fill="#b8b8b8"/><rect x="880" y="56" width="23" height="19.8" fill="#fff" stroke="#a8a8a8" stroke-width="1"/><path d="M887.6666666666666 56v19.8" stroke="#a8a8a8" stroke-width="0.7"/><path d="M895.3333333333334 56v19.8" stroke="#a8a8a8" stroke-width="0.7"/><path d="M880 60.95h23" stroke="#a8a8a8" stroke-width="0.7"/><path d="M880 65.9h23" stroke="#a8a8a8" stroke-width="0.7"/><path d="M880 70.85h23" stroke="#a8a8a8" stroke-width="0.7"/><rect x="886" y="61" width="10" height="10" fill="#ddd"/><path d="M904.5 63 L892 75.5" stroke="#b4b4b4" stroke-width="4.2"/><path d="M902 65.5l-2.5 2.5" stroke="#e8e8e8" stroke-width="1"/><path d="M885.5 82.5 c0-5 3.5-8 7.5-7.5 l1.2 1.2 c0 4-3 7-8.7 6.3z" fill="#a0a0a0"/><path d="M916.8 107h4l-2 2z" fill="#b8b8b8"/><rect x="952" y="54.5" width="23" height="20.5" fill="#fff" stroke="#a8a8a8"/><path d="M952 58.5h23M956 54.5v20.5" stroke="#a8a8a8" stroke-width="0.8"/><rect x="957" y="59.5" width="14" height="13" fill="#d0d0d0"/><path d="M978.5 61.5 L966 74" stroke="#b4b4b4" stroke-width="4.2"/><path d="M976 64l-2.5 2.5" stroke="#e8e8e8" stroke-width="1"/><path d="M959.5 81 c0-5 3.5-8 7.5-7.5 l1.2 1.2 c0 4-3 7-8.7 6.3z" fill="#a0a0a0"/><path d="M981 107h4l-2 2z" fill="#b8b8b8"/><path d="M1000.5 53h6v14.5h-6zM1000.5 57.8h6M1000.5 62.6h6M1006.5 57.5h8.5v5h-8.5M1010.5 57.5v5M1002 60h4l-1.5-1.5M1002 60l1.5 1.5" fill="none" stroke="#a8a8a8" stroke-width="0.9"/><path d="M1000.5 74h6v14.5h-6zM1000.5 78.8h6M1000.5 83.6h6M1004 78.5l3 5M1007 78.5l-3 5M1008.5 78.5l5.5 5.5M1014 78.5l-5.5 5.5" fill="none" stroke="#a8a8a8" stroke-width="0.9"/><path d="M1000.5 97h13v13h-13zM1000.5 100h13M1000.5 104h13M1000.5 107h13M1004 97v13M1010 97v13" fill="none" stroke="#a8a8a8" stroke-width="0.9"/><rect x="1004" y="101" width="6" height="3" fill="#b0b0b0"/><path d="M1059.8 60h4l-2 2z" fill="#c0c0c0"/><path d="M1078.8 81h4l-2 2z" fill="#c0c0c0"/><path d="M1056 102h4l-2 2z" fill="#c0c0c0"/><path d="M1112.5 55 V53.5 H1099.5 L1106 60 L1099.5 66.5 H1112.5 V65" fill="none" stroke="#333" stroke-width="2.2"/><path d="M1120 60h4l-2 2.2z" fill="#444"/><rect x="1100" y="74.5" width="13" height="14" fill="#fff" stroke="#a8a8a8"/><rect x="1100" y="74.5" width="13" height="2.6" fill="#a8a8a8"/><path d="M1106.5 78.5v7M1104 83l2.5 2.5 2.5-2.5" stroke="#a8a8a8" fill="none"/><path d="M1118 81h4l-2 2z" fill="#c0c0c0"/><path d="M1100.5 104.5 L1107 98 L1111 102 L1104.5 108.5 Z" fill="#d4587e"/><path d="M1102 109h11" stroke="#444" stroke-width="0.9"/><path d="M1118 102.5h4l-2 2.2z" fill="#444"/><path d="M1135.6 66.4L1140 56.2L1144.4 66.4M1137.2 62.8h5.6M1136.2 69.6h7.6l-7.6 9.6h8" fill="none" stroke="#a8a8a8" stroke-width="1.7"/><path d="M1146 62h16l-6 6.5v7.3h-3.8v-7.3z" fill="#a8a8a8"/><path d="M1148.5 63.2h11l-4 4.3h-3z" fill="#c4c4c4"/><path d="M1158.5 107h4l-2 2z" fill="#c0c0c0"/><path d="M1234 107h4l-2 2z" fill="#444"/><path d="M1192.2 66.5h9.8v11.3h-9.8zM1206 66.5h9.8v11.3h-9.8zM1193.8 60.5h7.4v6.5h-7.4zM1206.8 60.5h7.4v6.5h-7.4zM1195.2 56.3h4.6v4.8h-4.6zM1208.2 56.3h4.6v4.8h-4.6zM1201 63h6v5.2h-6z" fill="#555"/><path d="M1193.3 67v10.5M1206.9 67v10.5M1194.8 61v5.5M1207.8 61v5.5" stroke="#e8e8e8" stroke-width="0.7"/><path d="M1262 128.5l4-4 4 4" fill="none" stroke="#555" stroke-width="1.2"/><path d="M144 153.5h6l-3 3z" fill="#555"/><path d="M170.3 151v1.2M170.3 155v1.2M170.3 159v1.2" stroke="#888" stroke-width="1.1"/><path d="M194.5 149.2L209.5 163.2M209.5 149.2L194.5 163.2" stroke="#555" stroke-width="2"/><path d="M228 156.5l5.5 6 11-13" fill="none" stroke="#666" stroke-width="2.6"/><text x="260.5" y="162" font-family="Liberation Serif" font-style="italic" font-weight="700" font-size="19" fill="#555">f</text><text x="268.5" y="161.5" font-family="Liberation Serif" font-style="italic" font-weight="700" font-size="14" fill="#555">x</text><path d="M1262 153l5 5 5-5" fill="none" stroke="#555" stroke-width="2.2"/><path d="M19.5 182.5v10h-10z" fill="#dcdcdc"/><rect x="23.5" y="194.8" width="2.5" height="2.5" fill="#d0305a"/><rect x="644" y="194.8" width="2.5" height="2.5" fill="#d0305a"/><path d="M866.8 323.5h2.5l1 1 1-1h2.5M870.3 324.5v16.5M866.8 342h2.5l1-1 1 1h2.5" fill="none" stroke="#111" stroke-width="1.2"/><rect x="748.2" y="343.5" width="3.8" height="3.5" fill="#217346"/><rect x="1017.9" y="243.1" width="5" height="5" fill="#5b7fd0"/><rect x="1017.9" y="266.8" width="5" height="5" fill="#5b7fd0"/><rect x="1132.5" y="243.1" width="5" height="5" fill="#5b7fd0"/><rect x="1132.5" y="266.8" width="5" height="5" fill="#5b7fd0"/><rect x="1263.8" y="180.2" width="8.5" height="12.4" fill="#fff" stroke="#c2c2c2"/><path d="M1266 188.5h5l-2.5-3z" fill="#555"/><rect x="1263.8" y="659.5" width="8.5" height="12.6" fill="#fff" stroke="#c2c2c2"/><path d="M1266 664h5l-2.5 3z" fill="#555"/><path d="M29.2 680.8v7.2l-4-3.6z" fill="#1f4f35"/><path d="M51.8 680.8v7.2l4.2-3.6z" fill="#1f4f35"/><circle cx="741" cy="685.3" r="7" fill="none" stroke="#666" stroke-width="1.2"/><path d="M737 685.3h8M741 681.3v8" stroke="#555" stroke-width="1.6"/><path d="M768 679.5v1.2M768 684v1.2M768 688.5v1.2" stroke="#aaa" stroke-width="1.1"/><rect x="783.5" y="678.7" width="13.5" height="13.6" fill="#fff" stroke="#b8b8b8"/><path d="M792.5 682.3v6l-3-3z" fill="#444"/><rect x="1246.5" y="678.7" width="13" height="13.6" fill="#fff" stroke="#b8b8b8"/><path d="M1251.3 682.3v6.4l3.2-3.2z" fill="#444"/><rect x="67.5" y="703" width="12" height="11" fill="none" stroke="#e0f5e4" stroke-width="1.3"/><circle cx="69.5" cy="703.6" r="2.9" fill="#e0f5e4"/><path d="M70.6 708v4.5M73.6 707v5.5M76.6 708v4.5" stroke="#e0f5e4" stroke-width="2"/><rect x="1015.5" y="702.5" width="11.5" height="11" fill="none" stroke="#d8f0dc" stroke-width="1.2"/><path d="M1019.3 702.5v11M1023.2 702.5v11M1015.5 706.2h11.5M1015.5 709.9h11.5" stroke="#d8f0dc" stroke-width="1"/><rect x="1050.5" y="702.5" width="13" height="11" fill="none" stroke="#d8f0dc" stroke-width="1.2"/><rect x="1053.5" y="705" width="7" height="6" fill="none" stroke="#d8f0dc" stroke-width="1"/><rect x="1086.5" y="702.5" width="12.5" height="11" fill="none" stroke="#d8f0dc" stroke-width="1.2"/><rect x="1088" y="703" width="5.5" height="6.5" fill="#d8f0dc"/><path d="M1094.5 703v6.5" stroke="#d8f0dc"/><path d="M1115.5 708h4" stroke="#1a5a33" stroke-width="1.5"/><path d="M1124 708h93.5" stroke="#b8e8c0" stroke-width="1.8"/><path d="M1171.9 704v8" stroke="#d8f0dc" stroke-width="1.5"/><path d="M1222 708h8M1226 704v8" stroke="#1a5a33" stroke-width="1.8"/></svg>
<div class="a" style="left:1272px;top:0px;width:6px;height:720px;background:#000;"></div></body></html>
